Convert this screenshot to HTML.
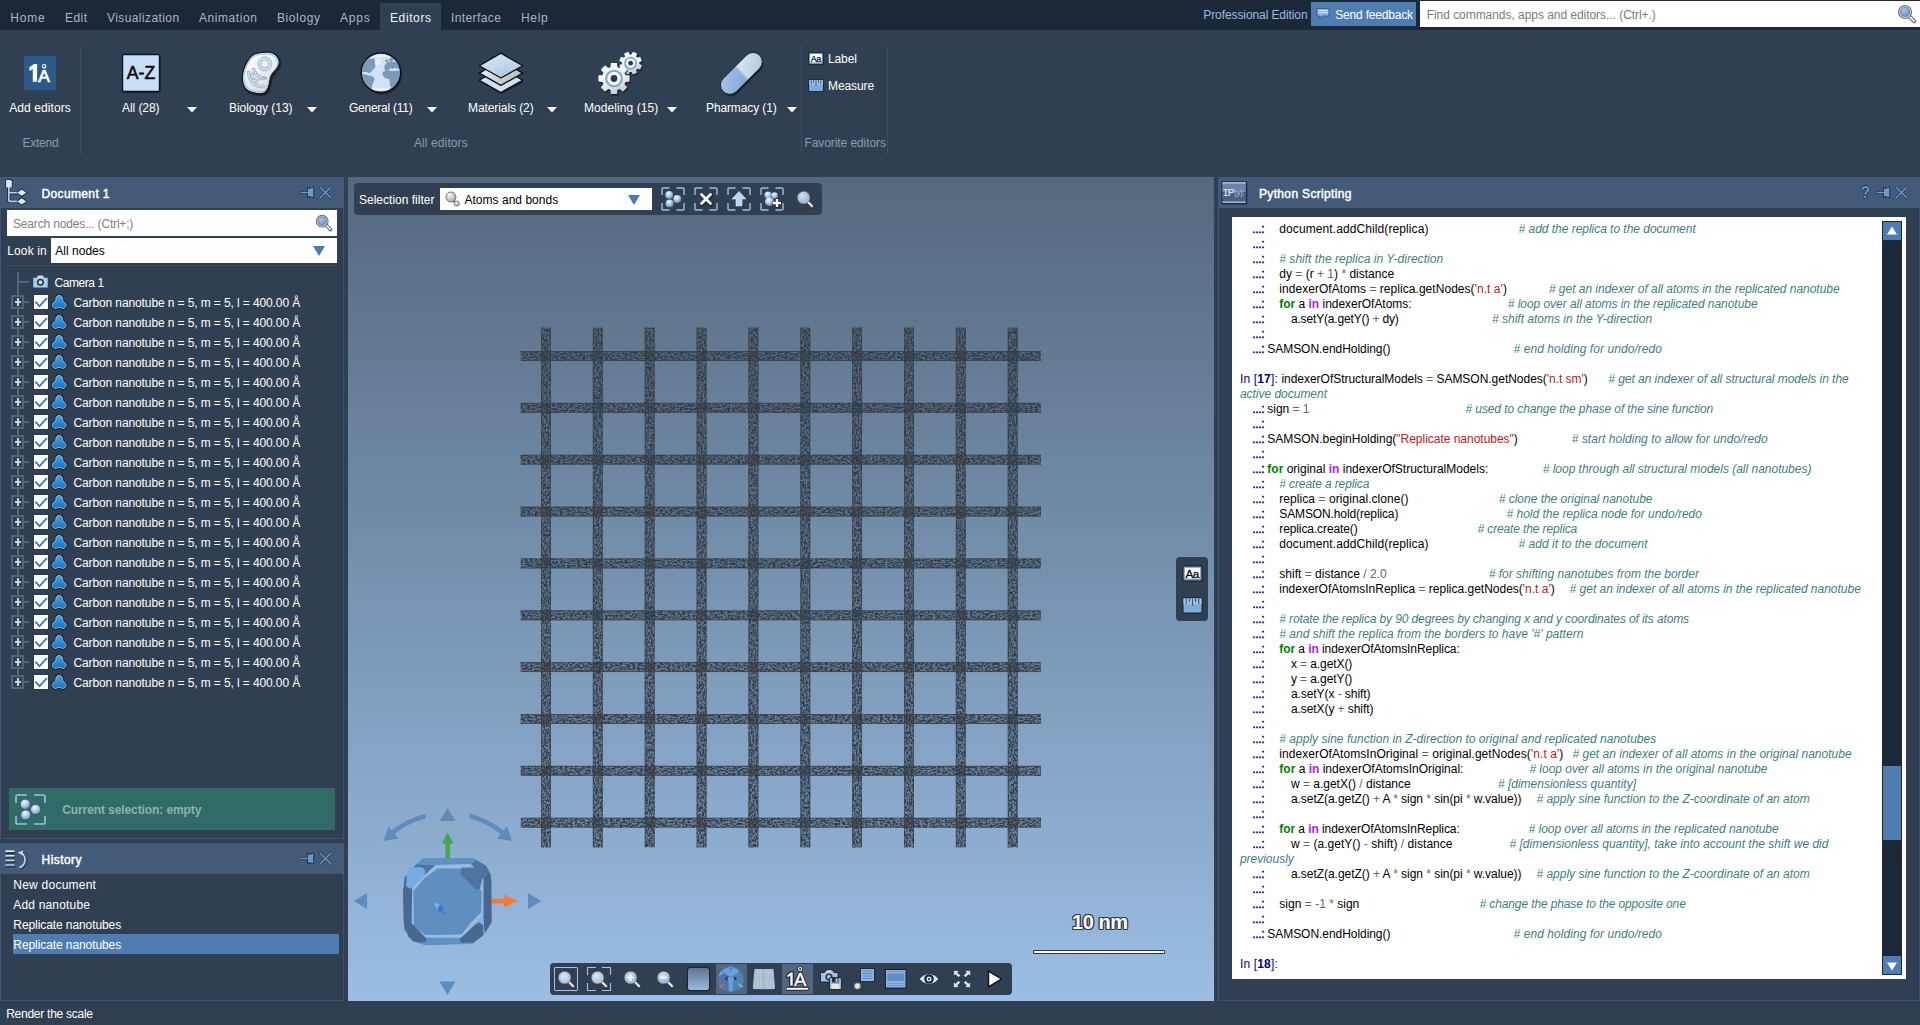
<!DOCTYPE html>
<html><head><meta charset="utf-8"><title>SAMSON</title><style>
html,body{margin:0;padding:0}
body{width:1920px;height:1025px;overflow:hidden;position:relative;background:#313f53;font-family:"Liberation Sans",sans-serif;font-size:12px}
.t{position:absolute;white-space:pre;font-family:"Liberation Sans",sans-serif}
svg{display:block;overflow:visible}
</style></head>
<body>
<div style="position:absolute;left:0px;top:0px;width:1920px;height:30px;background:#1c2737;"></div>
<div style="position:absolute;left:380px;top:3px;width:61px;height:27px;background:#313f53;"></div>
<span class="t" style="left:10.3px;top:12.09px;color:#abb6c6;font-size:12px;line-height:12px;letter-spacing:0.796px;">Home</span>
<span class="t" style="left:65px;top:12.09px;color:#abb6c6;font-size:12px;line-height:12px;letter-spacing:0.453px;">Edit</span>
<span class="t" style="left:107px;top:12.09px;color:#abb6c6;font-size:12px;line-height:12px;letter-spacing:0.411px;">Visualization</span>
<span class="t" style="left:199px;top:12.09px;color:#abb6c6;font-size:12px;line-height:12px;letter-spacing:0.569px;">Animation</span>
<span class="t" style="left:277px;top:12.09px;color:#abb6c6;font-size:12px;line-height:12px;letter-spacing:0.592px;">Biology</span>
<span class="t" style="left:340px;top:12.09px;color:#abb6c6;font-size:12px;line-height:12px;letter-spacing:0.785px;">Apps</span>
<span class="t" style="left:390px;top:12.09px;color:#f2f5f9;font-size:12px;line-height:12px;letter-spacing:0.606px;">Editors</span>
<span class="t" style="left:451px;top:12.09px;color:#abb6c6;font-size:12px;line-height:12px;letter-spacing:0.400px;">Interface</span>
<span class="t" style="left:521px;top:12.09px;color:#abb6c6;font-size:12px;line-height:12px;letter-spacing:0.653px;">Help</span>
<span class="t" style="left:1203.3px;top:9.09px;color:#9dbbe0;font-size:12px;line-height:12px;letter-spacing:-0.093px;">Professional Edition</span>
<div style="position:absolute;left:1311px;top:2px;width:105px;height:24px;background:#4f7db2;"></div>
<svg style="position:absolute;left:1316px;top:8px" width="14" height="12" viewBox="0 0 14 12">
<path d="M1 0.5h12v7.5h-7l-2.2 3v-3h-2.8z" fill="#8fb4de" stroke="#3a5f90" stroke-width="1"/>
<path d="M2 2.5h10M2 4.5h10" stroke="#c9def5" stroke-width="1"/></svg>
<span class="t" style="left:1335.3px;top:9.09px;color:#fff;font-size:12px;line-height:12px;letter-spacing:-0.197px;">Send feedback</span>
<div style="position:absolute;left:1420px;top:1px;width:500px;height:26px;background:#fff;"></div>
<span class="t" style="left:1426.7px;top:9.09px;color:#7b7b7b;font-size:12px;line-height:12px;letter-spacing:-0.046px;">Find commands, apps and editors... (Ctrl+.)</span>
<svg style="position:absolute;left:1897px;top:4px" width="20" height="20" viewBox="0 0 20 20">
<defs><radialGradient id="mg1" cx="0.38" cy="0.3" r="0.75"><stop offset="0" stop-color="#a8c8ee"/><stop offset="1" stop-color="#5f90d2"/></radialGradient></defs>
<path d="M12.6 12.6L17 17" stroke="#0b0f16" stroke-width="4.4" stroke-linecap="round" opacity="0.22" transform="translate(0.6,0.8)"/>
<path d="M12.4 12.4L17 17" stroke="#5d6166" stroke-width="3.7" stroke-linecap="round"/>
<path d="M13 13L16.9 16.9" stroke="#fbfbfb" stroke-width="1.9" stroke-linecap="round"/>
<circle cx="8" cy="8" r="6.5" fill="#e3e5e8" stroke="#6f7277" stroke-width="1.2"/><circle cx="8" cy="8" r="4.7" fill="url(#mg1)" stroke="#75787d" stroke-width="0.9"/>
</svg>
<div style="position:absolute;left:0px;top:30px;width:1920px;height:147px;background:#313f53;"></div>
<div style="position:absolute;left:80px;top:45px;width:1px;height:109px;background:#3e4d63;"></div>
<div style="position:absolute;left:801px;top:45px;width:1px;height:109px;background:#3e4d63;"></div>
<div style="position:absolute;left:887px;top:45px;width:1px;height:109px;background:#3e4d63;"></div>
<div style="position:absolute;left:24px;top:56px;width:32px;height:34px;background:#2c5b8b;border-radius:3px"></div>
<svg style="position:absolute;left:24px;top:56px" width="32" height="34" viewBox="0 0 32 34">
<path d="M13.1 7.9V25.8H8.8V13L5.7 15L5.2 11.6L10 7.9Z" fill="#fff"/>
<text x="14.3" y="25.8" font-family="Liberation Sans" font-size="17.4" fill="#fff" stroke="#fff" stroke-width="0.7">A</text>
<circle cx="20.2" cy="10.2" r="1.7" fill="none" stroke="#fff" stroke-width="1.1"/></svg>
<span class="t" style="left:9.2px;top:102.09px;color:#fff;font-size:12px;line-height:12px;letter-spacing:0.082px;">Add editors</span>
<span class="t" style="left:22.5px;top:137.09px;color:#8c9bb0;font-size:12px;line-height:12px;letter-spacing:-0.260px;">Extend</span>
<span class="t" style="left:122px;top:102.09px;color:#fff;font-size:12px;line-height:12px;letter-spacing:-0.064px;">All (28)</span>
<svg style="position:absolute;left:186.5px;top:107px" width="10" height="6" viewBox="0 0 10 6"><path d="M0 0h10l-5 5.6z" fill="#fff"/></svg>
<span class="t" style="left:229px;top:102.09px;color:#fff;font-size:12px;line-height:12px;letter-spacing:-0.044px;">Biology (13)</span>
<svg style="position:absolute;left:306.5px;top:107px" width="10" height="6" viewBox="0 0 10 6"><path d="M0 0h10l-5 5.6z" fill="#fff"/></svg>
<span class="t" style="left:349px;top:102.09px;color:#fff;font-size:12px;line-height:12px;letter-spacing:-0.249px;">General (11)</span>
<svg style="position:absolute;left:426.5px;top:107px" width="10" height="6" viewBox="0 0 10 6"><path d="M0 0h10l-5 5.6z" fill="#fff"/></svg>
<span class="t" style="left:468px;top:102.09px;color:#fff;font-size:12px;line-height:12px;letter-spacing:-0.084px;">Materials (2)</span>
<svg style="position:absolute;left:546.5px;top:107px" width="10" height="6" viewBox="0 0 10 6"><path d="M0 0h10l-5 5.6z" fill="#fff"/></svg>
<span class="t" style="left:584px;top:102.09px;color:#fff;font-size:12px;line-height:12px;letter-spacing:0.071px;">Modeling (15)</span>
<svg style="position:absolute;left:666.5px;top:107px" width="10" height="6" viewBox="0 0 10 6"><path d="M0 0h10l-5 5.6z" fill="#fff"/></svg>
<span class="t" style="left:706px;top:102.09px;color:#fff;font-size:12px;line-height:12px;letter-spacing:-0.119px;">Pharmacy (1)</span>
<svg style="position:absolute;left:786.5px;top:107px" width="10" height="6" viewBox="0 0 10 6"><path d="M0 0h10l-5 5.6z" fill="#fff"/></svg>
<span class="t" style="left:414px;top:137.09px;color:#8c9bb0;font-size:12px;line-height:12px;letter-spacing:0.101px;">All editors</span>
<span class="t" style="left:804.5px;top:137.09px;color:#8c9bb0;font-size:12px;line-height:12px;letter-spacing:-0.088px;">Favorite editors</span>
<span class="t" style="left:828px;top:53.09px;color:#fff;font-size:12px;line-height:12px;letter-spacing:-0.115px;">Label</span>
<span class="t" style="left:828px;top:80.09px;color:#fff;font-size:12px;line-height:12px;letter-spacing:-0.084px;">Measure</span>
<svg style="position:absolute;left:808.2px;top:51.5px" width="16" height="13" viewBox="0 0 16 13">
<rect x="0.4" y="0.4" width="15.2" height="12.2" rx="1.2" fill="#141b27"/>
<rect x="1.1" y="1.1" width="13.8" height="10.8" rx="0.8" fill="#7099c9"/>
<rect x="2.1" y="2.1" width="11.8" height="8.4" fill="#fdfdfd"/>
<text x="2.7" y="9.7" font-family="Liberation Sans" font-size="9" fill="#0a0a0a" stroke="#0a0a0a" stroke-width="0.25" letter-spacing="-0.5">Aa</text></svg>
<svg style="position:absolute;left:808.2px;top:78.6px" width="16" height="13" viewBox="0 0 16 13">
<rect x="0.4" y="0.4" width="15.2" height="12.2" rx="1.2" fill="#141b27"/>
<rect x="1.1" y="1.1" width="13.8" height="10.8" rx="0.6" fill="#80acdd"/>
<rect x="1.1" y="1.1" width="13.8" height="4.4" fill="#a3c6ec"/>
<path d="M3.2 1.1v4.2M5.6 1.1v3M8 1.1v5.6M10.4 1.1v3M12.8 1.1v4.2" stroke="#3b5878" stroke-width="0.9"/></svg>
<svg style="position:absolute;left:120px;top:52px" width="44" height="44" viewBox="0 0 44 44">
<rect x="2.5" y="2.5" width="37" height="37" rx="1.5" fill="#0b0f16" opacity="0.55" transform="translate(1.2,1.6)"/>
<rect x="2.5" y="2.5" width="37" height="37" rx="1" fill="#c9dff7" stroke="#10151d" stroke-width="1.4"/>
<text x="21" y="27.2" text-anchor="middle" font-family="Liberation Sans" font-size="17.6" fill="#0a0a0a" stroke="#0a0a0a" stroke-width="0.55" letter-spacing="0.1">A-Z</text></svg>
<svg style="position:absolute;left:235px;top:46px" width="52" height="52" viewBox="0 0 52 52">
<defs><linearGradient id="bio1" x1="0.2" y1="0" x2="0.7" y2="1"><stop offset="0" stop-color="#ffffff"/><stop offset="1" stop-color="#d9dde1"/></linearGradient></defs>
<g transform="translate(26,27) scale(1.035) translate(-26,-27)"><path d="M19.79 8.63Q21.82 7.61 26.13 7.10Q30.44 6.60 33.99 6.98Q37.54 7.36 39.83 9.26Q42.11 11.16 43.13 13.70Q44.14 16.24 43.38 18.77Q42.62 21.31 40.59 23.59Q38.56 25.88 37.04 27.65Q35.51 29.43 35.01 31.96Q34.50 34.50 33.99 37.54Q33.49 40.59 31.96 43.13Q30.44 45.66 28.41 46.42Q26.38 47.18 23.34 46.93Q20.29 46.68 17.00 45.66Q13.70 44.65 11.67 42.62Q9.64 40.59 8.75 37.54Q7.86 34.50 7.99 30.95Q8.12 27.40 9.13 23.85Q10.15 20.29 12.18 16.74Q14.21 13.19 15.98 11.42Q17.76 9.64 19.79 8.63Z" fill="#0b0f16" stroke="#0b0f16" stroke-width="2" opacity="0.55" transform="translate(1,1.4)"/>
<path d="M19.79 8.63Q21.82 7.61 26.13 7.10Q30.44 6.60 33.99 6.98Q37.54 7.36 39.83 9.26Q42.11 11.16 43.13 13.70Q44.14 16.24 43.38 18.77Q42.62 21.31 40.59 23.59Q38.56 25.88 37.04 27.65Q35.51 29.43 35.01 31.96Q34.50 34.50 33.99 37.54Q33.49 40.59 31.96 43.13Q30.44 45.66 28.41 46.42Q26.38 47.18 23.34 46.93Q20.29 46.68 17.00 45.66Q13.70 44.65 11.67 42.62Q9.64 40.59 8.75 37.54Q7.86 34.50 7.99 30.95Q8.12 27.40 9.13 23.85Q10.15 20.29 12.18 16.74Q14.21 13.19 15.98 11.42Q17.76 9.64 19.79 8.63Z" fill="#c9def4" stroke="#10161f" stroke-width="1.1"/></g>
<path d="M19.79 8.63Q21.82 7.61 26.13 7.10Q30.44 6.60 33.99 6.98Q37.54 7.36 39.83 9.26Q42.11 11.16 43.13 13.70Q44.14 16.24 43.38 18.77Q42.62 21.31 40.59 23.59Q38.56 25.88 37.04 27.65Q35.51 29.43 35.01 31.96Q34.50 34.50 33.99 37.54Q33.49 40.59 31.96 43.13Q30.44 45.66 28.41 46.42Q26.38 47.18 23.34 46.93Q20.29 46.68 17.00 45.66Q13.70 44.65 11.67 42.62Q9.64 40.59 8.75 37.54Q7.86 34.50 7.99 30.95Q8.12 27.40 9.13 23.85Q10.15 20.29 12.18 16.74Q14.21 13.19 15.98 11.42Q17.76 9.64 19.79 8.63Z" fill="url(#bio1)" stroke="#8792a0" stroke-width="0.5" transform="translate(26,27) scale(0.935) translate(-26,-27)"/>
<circle cx="29.83" cy="17.86" r="7.10" fill="#c5dcf3" stroke="#8792a0" stroke-width="0.5"/>
<circle cx="29.83" cy="17.86" r="3.86" fill="#f1f2f3" stroke="#8792a0" stroke-width="0.5"/>
<g fill="none" stroke-linecap="round">
<path d="M13.60 26.38Q14.21 35.51 20.29 38.56T28.16 40.33M18.52 23.34Q20.80 29.93 25.37 31.20T30.34 32.06M17.00 28.41Q17.25 32.47 19.03 32.47" stroke="#8792a0" stroke-width="3.1"/>
<path d="M13.60 26.38Q14.21 35.51 20.29 38.56T28.16 40.33M18.52 23.34Q20.80 29.93 25.37 31.20T30.34 32.06M17.00 28.41Q17.25 32.47 19.03 32.47" stroke="#c5dcf3" stroke-width="2.3"/>
<path d="M30.34 32.06Q22.83 32.47 21.31 35.51" stroke="#8792a0" stroke-width="2"/><path d="M30.34 32.06Q22.83 32.47 21.31 35.51" stroke="#c5dcf3" stroke-width="1.2"/>
</g></svg>
<svg style="position:absolute;left:360px;top:52px" width="44" height="44" viewBox="0 0 44 44">
<defs><clipPath id="gcl"><circle cx="20.9" cy="20.6" r="18.9"/></clipPath></defs>
<circle cx="22" cy="22.4" r="20" fill="#0b0f16" opacity="0.6"/>
<circle cx="20.9" cy="20.6" r="19.6" fill="#cfe3f8" stroke="#0d1219" stroke-width="1.5"/>
<g clip-path="url(#gcl)">
<path d="M2.6 10.7L7.2 7.3L13.8 7.1L14.9 9.2L14.5 15.3L9.7 20.4L5.1 19.1L2.4 19.4L2.0 15.3ZM2.6 22.4L7.7 23.9L12.3 24.9L14.0 27.0L12.3 31.5L10.7 36.1L5.1 32.6L2.6 27.0ZM24.9 14.3L27.5 10.7L31.5 10.2L35.6 10.7L38.6 14.3L39.7 16.9L35.6 15.3L32.5 16.3L30.5 15.3L28.0 17.8L25.4 17.8ZM29.5 8.2L31.5 5.7L33.8 6.7L31.5 8.8ZM25.9 8.2L27.5 8.0L27.5 9.5L26.1 9.5ZM23.2 20.4L26.5 19.1L33.6 19.6L40.3 19.4L40.3 24.4L37.1 32.6L32.5 36.1L30.5 33.6L30.0 27.0L25.4 25.5L23.2 23.4Z" fill="#7b99b9" stroke="#7b99b9" stroke-width="1.2" stroke-linejoin="round"/>
<path d="M15.3 7.3L20.4 7.1L20.4 10.7L17.3 14.0L15.3 11.3Z" fill="#ececec" stroke="#ececec" stroke-width="1" stroke-linejoin="round"/>
<ellipse cx="20.9" cy="4.2" rx="8.4" ry="1.1" fill="#f1efeb"/>
<ellipse cx="20.9" cy="37.2" rx="9.4" ry="1.4" fill="#f1efeb"/>
</g></svg>
<svg style="position:absolute;left:478px;top:52px" width="46" height="44" viewBox="0 0 46 44">
<defs><linearGradient id="ly1" x1="0.2" y1="0" x2="0.7" y2="1"><stop offset="0" stop-color="#d8e8fa"/><stop offset="1" stop-color="#aec6e0"/></linearGradient>
<linearGradient id="ly2" x1="0" y1="0" x2="1" y2="0.6"><stop offset="0" stop-color="#f6f6f6"/><stop offset="1" stop-color="#b9bcc0"/></linearGradient></defs>
<g stroke-linejoin="round">
<path d="M22.9 1.1L44.7 13.8L22.9 26L1.3 13.8Z" fill="#0b0f16" opacity="0.55" transform="translate(0.9,16.2)"/>
<path d="M22.9 1.1L44.7 13.8L22.9 26L1.3 13.8Z" fill="#cde1f6" stroke="#0b0f16" stroke-width="1.3" transform="translate(0,14.46)"/>
<path d="M22.9 1.1L44.7 13.8L22.9 26L1.3 13.8Z" fill="url(#ly2)" stroke="#0b0f16" stroke-width="1.3" transform="translate(0,7.36)"/>
<path d="M22.9 1.1L44.7 13.8L22.9 26L1.3 13.8Z" fill="url(#ly1)" stroke="#0b0f16" stroke-width="1.3"/></g></svg>
<svg style="position:absolute;left:598px;top:51px" width="46" height="46" viewBox="0 0 46 46">
<defs><linearGradient id="gg" x1="0.2" y1="0" x2="0.6" y2="1"><stop offset="0" stop-color="#ffffff"/><stop offset="0.6" stop-color="#eceef0"/><stop offset="1" stop-color="#c6cbd0"/></linearGradient></defs>
<path d="M43.10 14.72 L41.81 17.84 L39.15 16.96 L37.36 18.75 L38.24 21.41 L35.12 22.70 L33.87 20.20 L31.33 20.20 L30.08 22.70 L26.96 21.41 L27.84 18.75 L26.05 16.96 L23.39 17.84 L22.10 14.72 L24.60 13.47 L24.60 10.93 L22.10 9.68 L23.39 6.56 L26.05 7.44 L27.84 5.65 L26.96 2.99 L30.08 1.70 L31.33 4.20 L33.87 4.20 L35.12 1.70 L38.24 2.99 L37.36 5.65 L39.15 7.44 L41.81 6.56 L43.10 9.68 L40.60 10.93 L40.60 13.47Z" fill="#0b0f16" stroke="#0b0f16" stroke-width="2.4" stroke-linejoin="round" opacity="0.55" transform="translate(0.8,1.2)"/>
<path d="M43.10 14.72 L41.81 17.84 L39.15 16.96 L37.36 18.75 L38.24 21.41 L35.12 22.70 L33.87 20.20 L31.33 20.20 L30.08 22.70 L26.96 21.41 L27.84 18.75 L26.05 16.96 L23.39 17.84 L22.10 14.72 L24.60 13.47 L24.60 10.93 L22.10 9.68 L23.39 6.56 L26.05 7.44 L27.84 5.65 L26.96 2.99 L30.08 1.70 L31.33 4.20 L33.87 4.20 L35.12 1.70 L38.24 2.99 L37.36 5.65 L39.15 7.44 L41.81 6.56 L43.10 9.68 L40.60 10.93 L40.60 13.47Z" fill="url(#gg)" stroke="url(#gg)" stroke-width="1.4" stroke-linejoin="round"/>
<circle cx="32.6" cy="12.2" r="5.6" fill="#fbfbfc" stroke="#7ba7d9" stroke-width="1.7"/>
<circle cx="32.6" cy="12.2" r="2.4" fill="#2b394d"/>
<path d="M30.82 25.15 L30.82 29.85 L26.94 30.13 L25.59 33.38 L28.14 36.32 L24.82 39.64 L21.88 37.09 L18.63 38.44 L18.35 42.32 L13.65 42.32 L13.37 38.44 L10.12 37.09 L7.18 39.64 L3.86 36.32 L6.41 33.38 L5.06 30.13 L1.18 29.85 L1.18 25.15 L5.06 24.87 L6.41 21.62 L3.86 18.68 L7.18 15.36 L10.12 17.91 L13.37 16.56 L13.65 12.68 L18.35 12.68 L18.63 16.56 L21.88 17.91 L24.82 15.36 L28.14 18.68 L25.59 21.62 L26.94 24.87Z" fill="#0b0f16" stroke="#0b0f16" stroke-width="2.6" stroke-linejoin="round" opacity="0.55" transform="translate(0.8,1.2)"/>
<path d="M30.82 25.15 L30.82 29.85 L26.94 30.13 L25.59 33.38 L28.14 36.32 L24.82 39.64 L21.88 37.09 L18.63 38.44 L18.35 42.32 L13.65 42.32 L13.37 38.44 L10.12 37.09 L7.18 39.64 L3.86 36.32 L6.41 33.38 L5.06 30.13 L1.18 29.85 L1.18 25.15 L5.06 24.87 L6.41 21.62 L3.86 18.68 L7.18 15.36 L10.12 17.91 L13.37 16.56 L13.65 12.68 L18.35 12.68 L18.63 16.56 L21.88 17.91 L24.82 15.36 L28.14 18.68 L25.59 21.62 L26.94 24.87Z" fill="url(#gg)" stroke="url(#gg)" stroke-width="1.6" stroke-linejoin="round"/>
<circle cx="16" cy="27.5" r="7.8" fill="#fbfbfc" stroke="#7ba7d9" stroke-width="2.1"/>
<circle cx="16" cy="27.5" r="3.4" fill="#2b394d"/></svg>
<svg style="position:absolute;left:718px;top:51px" width="48" height="46" viewBox="0 0 48 46">
<defs><linearGradient id="pl1" x1="0" y1="0" x2="1" y2="1"><stop offset="0" stop-color="#dbe8f6"/><stop offset="1" stop-color="#b3c4d6"/></linearGradient>
<linearGradient id="pl2" x1="0" y1="0" x2="1" y2="1"><stop offset="0" stop-color="#a9c9ec"/><stop offset="1" stop-color="#7ea6d2"/></linearGradient>
<clipPath id="plc"><rect x="-25.75" y="-9.3" width="51.5" height="18.6" rx="9.3"/></clipPath></defs>
<g transform="translate(23.4,22.4) rotate(-45)">
<rect x="-25.75" y="-9.3" width="51.5" height="18.6" rx="9.3" fill="#0b0f16" opacity="0.6" transform="translate(-0.6,2.2)"/>
<g clip-path="url(#plc)"><rect x="-26.75" y="-10.3" width="26.75" height="20.6" fill="url(#pl2)"/><rect x="0" y="-10.3" width="26.75" height="20.6" fill="url(#pl1)"/><rect x="-1.2" y="-10.3" width="2.4" height="20.6" fill="#9dbde0"/></g>
<rect x="-25.75" y="-9.3" width="51.5" height="18.6" rx="9.3" fill="none" stroke="#1a222e" stroke-width="0.9"/>
</g></svg>
<svg width="0" height="0" style="position:absolute"><defs><linearGradient id="molg" x1="0" y1="0" x2="0" y2="1"><stop offset="0" stop-color="#3ea5ee"/><stop offset="1" stop-color="#1a73b9"/></linearGradient></defs></svg>
<div style="position:absolute;left:0px;top:177px;width:344px;height:31px;background:#435b79;"></div>
<div style="position:absolute;left:0px;top:208px;width:344px;height:631px;background:#313f53;box-sizing:border-box;border:1px solid #3d5170;border-top:none;"></div>
<div style="position:absolute;left:0px;top:208px;width:1px;height:631px;background:#3f5676;"></div>
<svg style="position:absolute;left:0px;top:177px" width="32" height="31" viewBox="0 0 32 31">
<g fill="none" stroke="#151e2d" stroke-opacity="0.8" stroke-width="3.4" stroke-linejoin="round"><path d="M8.8 10V22.4Q8.8 24.4 10.8 24.4H17M8.8 15.7H17"/></g>
<rect x="5.3" y="2.3" width="7.2" height="8.8" rx="1" fill="#151e2d" opacity="0.85"/>
<path d="M17 15.7L21.7 12.2L26.6 15.7L21.7 19.2Z M17 24.4L21.7 20.9L26.6 24.4L21.7 27.9Z" fill="#151e2d" stroke="#151e2d" stroke-width="1.4" opacity="0.8"/>
<path d="M8.8 10V22.4Q8.8 24.4 10.8 24.4H17M8.8 15.7H17" fill="none" stroke="#b3d2f3" stroke-width="1.7"/>
<path d="M6.1 3.1H10.3L11.8 4.6V10.4H6.1Z" fill="#d3e5f9"/><path d="M10 3.2V4.9H11.7" fill="none" stroke="#f7fbff" stroke-width="0.8"/>
<path d="M17.2 15.7L21.7 12.6L26.3 15.7L21.7 18.8Z M17.2 24.4L21.7 21.3L26.3 24.4L21.7 27.5Z" fill="#d7e8fa"/></svg>
<span class="t" style="left:41.5px;top:188.09px;color:#fff;font-size:12px;line-height:12px;-webkit-text-stroke:0.45px #fff;letter-spacing:0.360px;">Document 1</span>
<svg style="position:absolute;left:300px;top:187px" width="15" height="11" viewBox="0 0 15 11">
<g stroke="#27354b" stroke-width="2.2" stroke-linejoin="round" stroke-linecap="round" fill="#27354b">
<path d="M1 5.5H8"/><path d="M8 0.9C8.6 2 9.8 2.2 10.4 1.6L13.4 0.8C13 3.5 13 7.5 13.4 10.2L10.4 9.4C9.8 8.8 8.6 9 8 10.1Z"/></g>
<path d="M1 5.5H8" stroke="#6a99cf" stroke-width="1.2" stroke-linecap="round"/>
<path d="M8 0.9C8.6 2 9.8 2.2 10.4 1.6L13.4 0.8C13 3.5 13 7.5 13.4 10.2L10.4 9.4C9.8 8.8 8.6 9 8 10.1Z" fill="#6a99cf"/></svg>
<svg style="position:absolute;left:319px;top:186px" width="13" height="13" viewBox="0 0 13 13">
<path d="M1.2 1.2L11.8 11.8M11.8 1.2L1.2 11.8" stroke="#27354b" stroke-width="2.8" stroke-linecap="round"/>
<path d="M1.2 1.2L11.8 11.8M11.8 1.2L1.2 11.8" stroke="#6a99cf" stroke-width="1.5" stroke-linecap="round"/></svg>
<div style="position:absolute;left:7px;top:210px;width:330px;height:26px;background:#fff;"></div>
<span class="t" style="left:13px;top:218.09px;color:#808080;font-size:12px;line-height:12px;letter-spacing:-0.175px;">Search nodes... (Ctrl+;)</span>
<svg style="position:absolute;left:315px;top:213.5px" width="18" height="18" viewBox="0 0 20 20">
<defs><radialGradient id="mg2" cx="0.38" cy="0.3" r="0.75"><stop offset="0" stop-color="#a8c8ee"/><stop offset="1" stop-color="#5f90d2"/></radialGradient></defs>
<path d="M12.6 12.6L17 17" stroke="#0b0f16" stroke-width="4.4" stroke-linecap="round" opacity="0.22" transform="translate(0.6,0.8)"/>
<path d="M12.4 12.4L17 17" stroke="#5d6166" stroke-width="3.7" stroke-linecap="round"/>
<path d="M13 13L16.9 16.9" stroke="#fbfbfb" stroke-width="1.9" stroke-linecap="round"/>
<circle cx="8" cy="8" r="6.5" fill="#e3e5e8" stroke="#6f7277" stroke-width="1.2"/><circle cx="8" cy="8" r="4.7" fill="url(#mg2)" stroke="#75787d" stroke-width="0.9"/>
</svg>
<span class="t" style="left:7.3px;top:245.09px;color:#fff;font-size:12px;line-height:12px;letter-spacing:0.114px;">Look in</span>
<div style="position:absolute;left:51px;top:238px;width:286px;height:25px;background:#fff;"></div>
<span class="t" style="left:55.3px;top:245.09px;color:#000;font-size:12px;line-height:12px;letter-spacing:0.014px;">All nodes</span>
<svg style="position:absolute;left:313px;top:246px" width="12" height="10" viewBox="0 0 12 10"><path d="M0 0h12l-6 10z" fill="#4a7bb5"/></svg>
<div style="position:absolute;left:7px;top:265px;width:330px;height:1px;background:#3d4c62;"></div>
<div style="position:absolute;left:17px;top:272px;width:2px;height:411px;background:#55647b;"></div>
<div style="position:absolute;left:19px;top:281px;width:10px;height:2px;background:#55647b;"></div>
<svg style="position:absolute;left:33px;top:275px" width="15" height="13" viewBox="0 0 15 13">
<path d="M0.3 2.8h3.4l1-2.3h5.4l1 2.3h3.6v9.6H0.3z" fill="#a7ccf4"/>
<rect x="5.6" y="1.2" width="3.6" height="1.6" fill="#e8e8e8"/>
<circle cx="7.4" cy="7.2" r="3.5" fill="#2a2e36"/><circle cx="7.4" cy="7.2" r="2" fill="#d9d5d2"/></svg>
<span class="t" style="left:54.4px;top:277.09px;color:#fff;font-size:12px;line-height:12px;letter-spacing:-0.411px;">Camera 1</span>
<div style="position:absolute;left:11px;top:295px;width:13px;height:14px;box-sizing:border-box;border:2px solid #55647b;background:#313f53"></div>
<div style="position:absolute;left:14.6px;top:301px;width:6.4px;height:2px;background:#c9d3de;"></div>
<div style="position:absolute;left:16.8px;top:298.2px;width:2px;height:7.6px;background:#c9d3de;"></div>
<div style="position:absolute;left:24px;top:301px;width:5px;height:2px;background:#55647b;"></div>
<div style="position:absolute;left:34px;top:295px;width:14px;height:14px;background:#fff;box-shadow:0 0 0 0.6px #243246;"></div>
<svg style="position:absolute;left:34px;top:295px" width="14" height="14" viewBox="0 0 14 14"><path d="M1.3 6.6L5.5 11.2L12.9 3.2" fill="none" stroke="#4a7ab0" stroke-width="1.9"/></svg>
<svg style="position:absolute;left:51px;top:294px" width="17" height="16" viewBox="0 0 17 16">
<path d="M8.2 1.4C10.4 1.4 11.6 3 11.6 4.8C11.6 6.4 12 7.4 13.4 8.2C15.2 9.2 15.6 11.2 14.8 12.7C13.9 14.4 11.8 14.9 10.2 14C9 13.3 7.4 13.3 6.2 14C4.6 14.9 2.5 14.4 1.6 12.7C0.8 11.2 1.2 9.2 3 8.2C4.4 7.4 4.8 6.4 4.8 4.8C4.8 3 6 1.4 8.2 1.4Z" fill="#0a0f18" stroke="#0a0f18" stroke-width="2.4" stroke-linejoin="round" opacity="0.85"/>
<path d="M8.2 1.4C10.4 1.4 11.6 3 11.6 4.8C11.6 6.4 12 7.4 13.4 8.2C15.2 9.2 15.6 11.2 14.8 12.7C13.9 14.4 11.8 14.9 10.2 14C9 13.3 7.4 13.3 6.2 14C4.6 14.9 2.5 14.4 1.6 12.7C0.8 11.2 1.2 9.2 3 8.2C4.4 7.4 4.8 6.4 4.8 4.8C4.8 3 6 1.4 8.2 1.4Z" fill="url(#molg)" stroke="#bfe0fa" stroke-width="0.7" stroke-linejoin="round"/></svg>
<span class="t" style="left:73.4px;top:297.09px;color:#fff;font-size:12px;line-height:12px;letter-spacing:-0.106px;">Carbon nanotube n = 5, m = 5, l = 400.00 Å</span>
<div style="position:absolute;left:11px;top:315px;width:13px;height:14px;box-sizing:border-box;border:2px solid #55647b;background:#313f53"></div>
<div style="position:absolute;left:14.6px;top:321px;width:6.4px;height:2px;background:#c9d3de;"></div>
<div style="position:absolute;left:16.8px;top:318.2px;width:2px;height:7.6px;background:#c9d3de;"></div>
<div style="position:absolute;left:24px;top:321px;width:5px;height:2px;background:#55647b;"></div>
<div style="position:absolute;left:34px;top:315px;width:14px;height:14px;background:#fff;box-shadow:0 0 0 0.6px #243246;"></div>
<svg style="position:absolute;left:34px;top:315px" width="14" height="14" viewBox="0 0 14 14"><path d="M1.3 6.6L5.5 11.2L12.9 3.2" fill="none" stroke="#4a7ab0" stroke-width="1.9"/></svg>
<svg style="position:absolute;left:51px;top:314px" width="17" height="16" viewBox="0 0 17 16">
<path d="M8.2 1.4C10.4 1.4 11.6 3 11.6 4.8C11.6 6.4 12 7.4 13.4 8.2C15.2 9.2 15.6 11.2 14.8 12.7C13.9 14.4 11.8 14.9 10.2 14C9 13.3 7.4 13.3 6.2 14C4.6 14.9 2.5 14.4 1.6 12.7C0.8 11.2 1.2 9.2 3 8.2C4.4 7.4 4.8 6.4 4.8 4.8C4.8 3 6 1.4 8.2 1.4Z" fill="#0a0f18" stroke="#0a0f18" stroke-width="2.4" stroke-linejoin="round" opacity="0.85"/>
<path d="M8.2 1.4C10.4 1.4 11.6 3 11.6 4.8C11.6 6.4 12 7.4 13.4 8.2C15.2 9.2 15.6 11.2 14.8 12.7C13.9 14.4 11.8 14.9 10.2 14C9 13.3 7.4 13.3 6.2 14C4.6 14.9 2.5 14.4 1.6 12.7C0.8 11.2 1.2 9.2 3 8.2C4.4 7.4 4.8 6.4 4.8 4.8C4.8 3 6 1.4 8.2 1.4Z" fill="url(#molg)" stroke="#bfe0fa" stroke-width="0.7" stroke-linejoin="round"/></svg>
<span class="t" style="left:73.4px;top:317.09px;color:#fff;font-size:12px;line-height:12px;letter-spacing:-0.106px;">Carbon nanotube n = 5, m = 5, l = 400.00 Å</span>
<div style="position:absolute;left:11px;top:335px;width:13px;height:14px;box-sizing:border-box;border:2px solid #55647b;background:#313f53"></div>
<div style="position:absolute;left:14.6px;top:341px;width:6.4px;height:2px;background:#c9d3de;"></div>
<div style="position:absolute;left:16.8px;top:338.2px;width:2px;height:7.6px;background:#c9d3de;"></div>
<div style="position:absolute;left:24px;top:341px;width:5px;height:2px;background:#55647b;"></div>
<div style="position:absolute;left:34px;top:335px;width:14px;height:14px;background:#fff;box-shadow:0 0 0 0.6px #243246;"></div>
<svg style="position:absolute;left:34px;top:335px" width="14" height="14" viewBox="0 0 14 14"><path d="M1.3 6.6L5.5 11.2L12.9 3.2" fill="none" stroke="#4a7ab0" stroke-width="1.9"/></svg>
<svg style="position:absolute;left:51px;top:334px" width="17" height="16" viewBox="0 0 17 16">
<path d="M8.2 1.4C10.4 1.4 11.6 3 11.6 4.8C11.6 6.4 12 7.4 13.4 8.2C15.2 9.2 15.6 11.2 14.8 12.7C13.9 14.4 11.8 14.9 10.2 14C9 13.3 7.4 13.3 6.2 14C4.6 14.9 2.5 14.4 1.6 12.7C0.8 11.2 1.2 9.2 3 8.2C4.4 7.4 4.8 6.4 4.8 4.8C4.8 3 6 1.4 8.2 1.4Z" fill="#0a0f18" stroke="#0a0f18" stroke-width="2.4" stroke-linejoin="round" opacity="0.85"/>
<path d="M8.2 1.4C10.4 1.4 11.6 3 11.6 4.8C11.6 6.4 12 7.4 13.4 8.2C15.2 9.2 15.6 11.2 14.8 12.7C13.9 14.4 11.8 14.9 10.2 14C9 13.3 7.4 13.3 6.2 14C4.6 14.9 2.5 14.4 1.6 12.7C0.8 11.2 1.2 9.2 3 8.2C4.4 7.4 4.8 6.4 4.8 4.8C4.8 3 6 1.4 8.2 1.4Z" fill="url(#molg)" stroke="#bfe0fa" stroke-width="0.7" stroke-linejoin="round"/></svg>
<span class="t" style="left:73.4px;top:337.09px;color:#fff;font-size:12px;line-height:12px;letter-spacing:-0.106px;">Carbon nanotube n = 5, m = 5, l = 400.00 Å</span>
<div style="position:absolute;left:11px;top:355px;width:13px;height:14px;box-sizing:border-box;border:2px solid #55647b;background:#313f53"></div>
<div style="position:absolute;left:14.6px;top:361px;width:6.4px;height:2px;background:#c9d3de;"></div>
<div style="position:absolute;left:16.8px;top:358.2px;width:2px;height:7.6px;background:#c9d3de;"></div>
<div style="position:absolute;left:24px;top:361px;width:5px;height:2px;background:#55647b;"></div>
<div style="position:absolute;left:34px;top:355px;width:14px;height:14px;background:#fff;box-shadow:0 0 0 0.6px #243246;"></div>
<svg style="position:absolute;left:34px;top:355px" width="14" height="14" viewBox="0 0 14 14"><path d="M1.3 6.6L5.5 11.2L12.9 3.2" fill="none" stroke="#4a7ab0" stroke-width="1.9"/></svg>
<svg style="position:absolute;left:51px;top:354px" width="17" height="16" viewBox="0 0 17 16">
<path d="M8.2 1.4C10.4 1.4 11.6 3 11.6 4.8C11.6 6.4 12 7.4 13.4 8.2C15.2 9.2 15.6 11.2 14.8 12.7C13.9 14.4 11.8 14.9 10.2 14C9 13.3 7.4 13.3 6.2 14C4.6 14.9 2.5 14.4 1.6 12.7C0.8 11.2 1.2 9.2 3 8.2C4.4 7.4 4.8 6.4 4.8 4.8C4.8 3 6 1.4 8.2 1.4Z" fill="#0a0f18" stroke="#0a0f18" stroke-width="2.4" stroke-linejoin="round" opacity="0.85"/>
<path d="M8.2 1.4C10.4 1.4 11.6 3 11.6 4.8C11.6 6.4 12 7.4 13.4 8.2C15.2 9.2 15.6 11.2 14.8 12.7C13.9 14.4 11.8 14.9 10.2 14C9 13.3 7.4 13.3 6.2 14C4.6 14.9 2.5 14.4 1.6 12.7C0.8 11.2 1.2 9.2 3 8.2C4.4 7.4 4.8 6.4 4.8 4.8C4.8 3 6 1.4 8.2 1.4Z" fill="url(#molg)" stroke="#bfe0fa" stroke-width="0.7" stroke-linejoin="round"/></svg>
<span class="t" style="left:73.4px;top:357.09px;color:#fff;font-size:12px;line-height:12px;letter-spacing:-0.106px;">Carbon nanotube n = 5, m = 5, l = 400.00 Å</span>
<div style="position:absolute;left:11px;top:375px;width:13px;height:14px;box-sizing:border-box;border:2px solid #55647b;background:#313f53"></div>
<div style="position:absolute;left:14.6px;top:381px;width:6.4px;height:2px;background:#c9d3de;"></div>
<div style="position:absolute;left:16.8px;top:378.2px;width:2px;height:7.6px;background:#c9d3de;"></div>
<div style="position:absolute;left:24px;top:381px;width:5px;height:2px;background:#55647b;"></div>
<div style="position:absolute;left:34px;top:375px;width:14px;height:14px;background:#fff;box-shadow:0 0 0 0.6px #243246;"></div>
<svg style="position:absolute;left:34px;top:375px" width="14" height="14" viewBox="0 0 14 14"><path d="M1.3 6.6L5.5 11.2L12.9 3.2" fill="none" stroke="#4a7ab0" stroke-width="1.9"/></svg>
<svg style="position:absolute;left:51px;top:374px" width="17" height="16" viewBox="0 0 17 16">
<path d="M8.2 1.4C10.4 1.4 11.6 3 11.6 4.8C11.6 6.4 12 7.4 13.4 8.2C15.2 9.2 15.6 11.2 14.8 12.7C13.9 14.4 11.8 14.9 10.2 14C9 13.3 7.4 13.3 6.2 14C4.6 14.9 2.5 14.4 1.6 12.7C0.8 11.2 1.2 9.2 3 8.2C4.4 7.4 4.8 6.4 4.8 4.8C4.8 3 6 1.4 8.2 1.4Z" fill="#0a0f18" stroke="#0a0f18" stroke-width="2.4" stroke-linejoin="round" opacity="0.85"/>
<path d="M8.2 1.4C10.4 1.4 11.6 3 11.6 4.8C11.6 6.4 12 7.4 13.4 8.2C15.2 9.2 15.6 11.2 14.8 12.7C13.9 14.4 11.8 14.9 10.2 14C9 13.3 7.4 13.3 6.2 14C4.6 14.9 2.5 14.4 1.6 12.7C0.8 11.2 1.2 9.2 3 8.2C4.4 7.4 4.8 6.4 4.8 4.8C4.8 3 6 1.4 8.2 1.4Z" fill="url(#molg)" stroke="#bfe0fa" stroke-width="0.7" stroke-linejoin="round"/></svg>
<span class="t" style="left:73.4px;top:377.09px;color:#fff;font-size:12px;line-height:12px;letter-spacing:-0.106px;">Carbon nanotube n = 5, m = 5, l = 400.00 Å</span>
<div style="position:absolute;left:11px;top:395px;width:13px;height:14px;box-sizing:border-box;border:2px solid #55647b;background:#313f53"></div>
<div style="position:absolute;left:14.6px;top:401px;width:6.4px;height:2px;background:#c9d3de;"></div>
<div style="position:absolute;left:16.8px;top:398.2px;width:2px;height:7.6px;background:#c9d3de;"></div>
<div style="position:absolute;left:24px;top:401px;width:5px;height:2px;background:#55647b;"></div>
<div style="position:absolute;left:34px;top:395px;width:14px;height:14px;background:#fff;box-shadow:0 0 0 0.6px #243246;"></div>
<svg style="position:absolute;left:34px;top:395px" width="14" height="14" viewBox="0 0 14 14"><path d="M1.3 6.6L5.5 11.2L12.9 3.2" fill="none" stroke="#4a7ab0" stroke-width="1.9"/></svg>
<svg style="position:absolute;left:51px;top:394px" width="17" height="16" viewBox="0 0 17 16">
<path d="M8.2 1.4C10.4 1.4 11.6 3 11.6 4.8C11.6 6.4 12 7.4 13.4 8.2C15.2 9.2 15.6 11.2 14.8 12.7C13.9 14.4 11.8 14.9 10.2 14C9 13.3 7.4 13.3 6.2 14C4.6 14.9 2.5 14.4 1.6 12.7C0.8 11.2 1.2 9.2 3 8.2C4.4 7.4 4.8 6.4 4.8 4.8C4.8 3 6 1.4 8.2 1.4Z" fill="#0a0f18" stroke="#0a0f18" stroke-width="2.4" stroke-linejoin="round" opacity="0.85"/>
<path d="M8.2 1.4C10.4 1.4 11.6 3 11.6 4.8C11.6 6.4 12 7.4 13.4 8.2C15.2 9.2 15.6 11.2 14.8 12.7C13.9 14.4 11.8 14.9 10.2 14C9 13.3 7.4 13.3 6.2 14C4.6 14.9 2.5 14.4 1.6 12.7C0.8 11.2 1.2 9.2 3 8.2C4.4 7.4 4.8 6.4 4.8 4.8C4.8 3 6 1.4 8.2 1.4Z" fill="url(#molg)" stroke="#bfe0fa" stroke-width="0.7" stroke-linejoin="round"/></svg>
<span class="t" style="left:73.4px;top:397.09px;color:#fff;font-size:12px;line-height:12px;letter-spacing:-0.106px;">Carbon nanotube n = 5, m = 5, l = 400.00 Å</span>
<div style="position:absolute;left:11px;top:415px;width:13px;height:14px;box-sizing:border-box;border:2px solid #55647b;background:#313f53"></div>
<div style="position:absolute;left:14.6px;top:421px;width:6.4px;height:2px;background:#c9d3de;"></div>
<div style="position:absolute;left:16.8px;top:418.2px;width:2px;height:7.6px;background:#c9d3de;"></div>
<div style="position:absolute;left:24px;top:421px;width:5px;height:2px;background:#55647b;"></div>
<div style="position:absolute;left:34px;top:415px;width:14px;height:14px;background:#fff;box-shadow:0 0 0 0.6px #243246;"></div>
<svg style="position:absolute;left:34px;top:415px" width="14" height="14" viewBox="0 0 14 14"><path d="M1.3 6.6L5.5 11.2L12.9 3.2" fill="none" stroke="#4a7ab0" stroke-width="1.9"/></svg>
<svg style="position:absolute;left:51px;top:414px" width="17" height="16" viewBox="0 0 17 16">
<path d="M8.2 1.4C10.4 1.4 11.6 3 11.6 4.8C11.6 6.4 12 7.4 13.4 8.2C15.2 9.2 15.6 11.2 14.8 12.7C13.9 14.4 11.8 14.9 10.2 14C9 13.3 7.4 13.3 6.2 14C4.6 14.9 2.5 14.4 1.6 12.7C0.8 11.2 1.2 9.2 3 8.2C4.4 7.4 4.8 6.4 4.8 4.8C4.8 3 6 1.4 8.2 1.4Z" fill="#0a0f18" stroke="#0a0f18" stroke-width="2.4" stroke-linejoin="round" opacity="0.85"/>
<path d="M8.2 1.4C10.4 1.4 11.6 3 11.6 4.8C11.6 6.4 12 7.4 13.4 8.2C15.2 9.2 15.6 11.2 14.8 12.7C13.9 14.4 11.8 14.9 10.2 14C9 13.3 7.4 13.3 6.2 14C4.6 14.9 2.5 14.4 1.6 12.7C0.8 11.2 1.2 9.2 3 8.2C4.4 7.4 4.8 6.4 4.8 4.8C4.8 3 6 1.4 8.2 1.4Z" fill="url(#molg)" stroke="#bfe0fa" stroke-width="0.7" stroke-linejoin="round"/></svg>
<span class="t" style="left:73.4px;top:417.09px;color:#fff;font-size:12px;line-height:12px;letter-spacing:-0.106px;">Carbon nanotube n = 5, m = 5, l = 400.00 Å</span>
<div style="position:absolute;left:11px;top:435px;width:13px;height:14px;box-sizing:border-box;border:2px solid #55647b;background:#313f53"></div>
<div style="position:absolute;left:14.6px;top:441px;width:6.4px;height:2px;background:#c9d3de;"></div>
<div style="position:absolute;left:16.8px;top:438.2px;width:2px;height:7.6px;background:#c9d3de;"></div>
<div style="position:absolute;left:24px;top:441px;width:5px;height:2px;background:#55647b;"></div>
<div style="position:absolute;left:34px;top:435px;width:14px;height:14px;background:#fff;box-shadow:0 0 0 0.6px #243246;"></div>
<svg style="position:absolute;left:34px;top:435px" width="14" height="14" viewBox="0 0 14 14"><path d="M1.3 6.6L5.5 11.2L12.9 3.2" fill="none" stroke="#4a7ab0" stroke-width="1.9"/></svg>
<svg style="position:absolute;left:51px;top:434px" width="17" height="16" viewBox="0 0 17 16">
<path d="M8.2 1.4C10.4 1.4 11.6 3 11.6 4.8C11.6 6.4 12 7.4 13.4 8.2C15.2 9.2 15.6 11.2 14.8 12.7C13.9 14.4 11.8 14.9 10.2 14C9 13.3 7.4 13.3 6.2 14C4.6 14.9 2.5 14.4 1.6 12.7C0.8 11.2 1.2 9.2 3 8.2C4.4 7.4 4.8 6.4 4.8 4.8C4.8 3 6 1.4 8.2 1.4Z" fill="#0a0f18" stroke="#0a0f18" stroke-width="2.4" stroke-linejoin="round" opacity="0.85"/>
<path d="M8.2 1.4C10.4 1.4 11.6 3 11.6 4.8C11.6 6.4 12 7.4 13.4 8.2C15.2 9.2 15.6 11.2 14.8 12.7C13.9 14.4 11.8 14.9 10.2 14C9 13.3 7.4 13.3 6.2 14C4.6 14.9 2.5 14.4 1.6 12.7C0.8 11.2 1.2 9.2 3 8.2C4.4 7.4 4.8 6.4 4.8 4.8C4.8 3 6 1.4 8.2 1.4Z" fill="url(#molg)" stroke="#bfe0fa" stroke-width="0.7" stroke-linejoin="round"/></svg>
<span class="t" style="left:73.4px;top:437.09px;color:#fff;font-size:12px;line-height:12px;letter-spacing:-0.106px;">Carbon nanotube n = 5, m = 5, l = 400.00 Å</span>
<div style="position:absolute;left:11px;top:455px;width:13px;height:14px;box-sizing:border-box;border:2px solid #55647b;background:#313f53"></div>
<div style="position:absolute;left:14.6px;top:461px;width:6.4px;height:2px;background:#c9d3de;"></div>
<div style="position:absolute;left:16.8px;top:458.2px;width:2px;height:7.6px;background:#c9d3de;"></div>
<div style="position:absolute;left:24px;top:461px;width:5px;height:2px;background:#55647b;"></div>
<div style="position:absolute;left:34px;top:455px;width:14px;height:14px;background:#fff;box-shadow:0 0 0 0.6px #243246;"></div>
<svg style="position:absolute;left:34px;top:455px" width="14" height="14" viewBox="0 0 14 14"><path d="M1.3 6.6L5.5 11.2L12.9 3.2" fill="none" stroke="#4a7ab0" stroke-width="1.9"/></svg>
<svg style="position:absolute;left:51px;top:454px" width="17" height="16" viewBox="0 0 17 16">
<path d="M8.2 1.4C10.4 1.4 11.6 3 11.6 4.8C11.6 6.4 12 7.4 13.4 8.2C15.2 9.2 15.6 11.2 14.8 12.7C13.9 14.4 11.8 14.9 10.2 14C9 13.3 7.4 13.3 6.2 14C4.6 14.9 2.5 14.4 1.6 12.7C0.8 11.2 1.2 9.2 3 8.2C4.4 7.4 4.8 6.4 4.8 4.8C4.8 3 6 1.4 8.2 1.4Z" fill="#0a0f18" stroke="#0a0f18" stroke-width="2.4" stroke-linejoin="round" opacity="0.85"/>
<path d="M8.2 1.4C10.4 1.4 11.6 3 11.6 4.8C11.6 6.4 12 7.4 13.4 8.2C15.2 9.2 15.6 11.2 14.8 12.7C13.9 14.4 11.8 14.9 10.2 14C9 13.3 7.4 13.3 6.2 14C4.6 14.9 2.5 14.4 1.6 12.7C0.8 11.2 1.2 9.2 3 8.2C4.4 7.4 4.8 6.4 4.8 4.8C4.8 3 6 1.4 8.2 1.4Z" fill="url(#molg)" stroke="#bfe0fa" stroke-width="0.7" stroke-linejoin="round"/></svg>
<span class="t" style="left:73.4px;top:457.09px;color:#fff;font-size:12px;line-height:12px;letter-spacing:-0.106px;">Carbon nanotube n = 5, m = 5, l = 400.00 Å</span>
<div style="position:absolute;left:11px;top:475px;width:13px;height:14px;box-sizing:border-box;border:2px solid #55647b;background:#313f53"></div>
<div style="position:absolute;left:14.6px;top:481px;width:6.4px;height:2px;background:#c9d3de;"></div>
<div style="position:absolute;left:16.8px;top:478.2px;width:2px;height:7.6px;background:#c9d3de;"></div>
<div style="position:absolute;left:24px;top:481px;width:5px;height:2px;background:#55647b;"></div>
<div style="position:absolute;left:34px;top:475px;width:14px;height:14px;background:#fff;box-shadow:0 0 0 0.6px #243246;"></div>
<svg style="position:absolute;left:34px;top:475px" width="14" height="14" viewBox="0 0 14 14"><path d="M1.3 6.6L5.5 11.2L12.9 3.2" fill="none" stroke="#4a7ab0" stroke-width="1.9"/></svg>
<svg style="position:absolute;left:51px;top:474px" width="17" height="16" viewBox="0 0 17 16">
<path d="M8.2 1.4C10.4 1.4 11.6 3 11.6 4.8C11.6 6.4 12 7.4 13.4 8.2C15.2 9.2 15.6 11.2 14.8 12.7C13.9 14.4 11.8 14.9 10.2 14C9 13.3 7.4 13.3 6.2 14C4.6 14.9 2.5 14.4 1.6 12.7C0.8 11.2 1.2 9.2 3 8.2C4.4 7.4 4.8 6.4 4.8 4.8C4.8 3 6 1.4 8.2 1.4Z" fill="#0a0f18" stroke="#0a0f18" stroke-width="2.4" stroke-linejoin="round" opacity="0.85"/>
<path d="M8.2 1.4C10.4 1.4 11.6 3 11.6 4.8C11.6 6.4 12 7.4 13.4 8.2C15.2 9.2 15.6 11.2 14.8 12.7C13.9 14.4 11.8 14.9 10.2 14C9 13.3 7.4 13.3 6.2 14C4.6 14.9 2.5 14.4 1.6 12.7C0.8 11.2 1.2 9.2 3 8.2C4.4 7.4 4.8 6.4 4.8 4.8C4.8 3 6 1.4 8.2 1.4Z" fill="url(#molg)" stroke="#bfe0fa" stroke-width="0.7" stroke-linejoin="round"/></svg>
<span class="t" style="left:73.4px;top:477.09px;color:#fff;font-size:12px;line-height:12px;letter-spacing:-0.106px;">Carbon nanotube n = 5, m = 5, l = 400.00 Å</span>
<div style="position:absolute;left:11px;top:495px;width:13px;height:14px;box-sizing:border-box;border:2px solid #55647b;background:#313f53"></div>
<div style="position:absolute;left:14.6px;top:501px;width:6.4px;height:2px;background:#c9d3de;"></div>
<div style="position:absolute;left:16.8px;top:498.2px;width:2px;height:7.6px;background:#c9d3de;"></div>
<div style="position:absolute;left:24px;top:501px;width:5px;height:2px;background:#55647b;"></div>
<div style="position:absolute;left:34px;top:495px;width:14px;height:14px;background:#fff;box-shadow:0 0 0 0.6px #243246;"></div>
<svg style="position:absolute;left:34px;top:495px" width="14" height="14" viewBox="0 0 14 14"><path d="M1.3 6.6L5.5 11.2L12.9 3.2" fill="none" stroke="#4a7ab0" stroke-width="1.9"/></svg>
<svg style="position:absolute;left:51px;top:494px" width="17" height="16" viewBox="0 0 17 16">
<path d="M8.2 1.4C10.4 1.4 11.6 3 11.6 4.8C11.6 6.4 12 7.4 13.4 8.2C15.2 9.2 15.6 11.2 14.8 12.7C13.9 14.4 11.8 14.9 10.2 14C9 13.3 7.4 13.3 6.2 14C4.6 14.9 2.5 14.4 1.6 12.7C0.8 11.2 1.2 9.2 3 8.2C4.4 7.4 4.8 6.4 4.8 4.8C4.8 3 6 1.4 8.2 1.4Z" fill="#0a0f18" stroke="#0a0f18" stroke-width="2.4" stroke-linejoin="round" opacity="0.85"/>
<path d="M8.2 1.4C10.4 1.4 11.6 3 11.6 4.8C11.6 6.4 12 7.4 13.4 8.2C15.2 9.2 15.6 11.2 14.8 12.7C13.9 14.4 11.8 14.9 10.2 14C9 13.3 7.4 13.3 6.2 14C4.6 14.9 2.5 14.4 1.6 12.7C0.8 11.2 1.2 9.2 3 8.2C4.4 7.4 4.8 6.4 4.8 4.8C4.8 3 6 1.4 8.2 1.4Z" fill="url(#molg)" stroke="#bfe0fa" stroke-width="0.7" stroke-linejoin="round"/></svg>
<span class="t" style="left:73.4px;top:497.09px;color:#fff;font-size:12px;line-height:12px;letter-spacing:-0.106px;">Carbon nanotube n = 5, m = 5, l = 400.00 Å</span>
<div style="position:absolute;left:11px;top:515px;width:13px;height:14px;box-sizing:border-box;border:2px solid #55647b;background:#313f53"></div>
<div style="position:absolute;left:14.6px;top:521px;width:6.4px;height:2px;background:#c9d3de;"></div>
<div style="position:absolute;left:16.8px;top:518.2px;width:2px;height:7.6px;background:#c9d3de;"></div>
<div style="position:absolute;left:24px;top:521px;width:5px;height:2px;background:#55647b;"></div>
<div style="position:absolute;left:34px;top:515px;width:14px;height:14px;background:#fff;box-shadow:0 0 0 0.6px #243246;"></div>
<svg style="position:absolute;left:34px;top:515px" width="14" height="14" viewBox="0 0 14 14"><path d="M1.3 6.6L5.5 11.2L12.9 3.2" fill="none" stroke="#4a7ab0" stroke-width="1.9"/></svg>
<svg style="position:absolute;left:51px;top:514px" width="17" height="16" viewBox="0 0 17 16">
<path d="M8.2 1.4C10.4 1.4 11.6 3 11.6 4.8C11.6 6.4 12 7.4 13.4 8.2C15.2 9.2 15.6 11.2 14.8 12.7C13.9 14.4 11.8 14.9 10.2 14C9 13.3 7.4 13.3 6.2 14C4.6 14.9 2.5 14.4 1.6 12.7C0.8 11.2 1.2 9.2 3 8.2C4.4 7.4 4.8 6.4 4.8 4.8C4.8 3 6 1.4 8.2 1.4Z" fill="#0a0f18" stroke="#0a0f18" stroke-width="2.4" stroke-linejoin="round" opacity="0.85"/>
<path d="M8.2 1.4C10.4 1.4 11.6 3 11.6 4.8C11.6 6.4 12 7.4 13.4 8.2C15.2 9.2 15.6 11.2 14.8 12.7C13.9 14.4 11.8 14.9 10.2 14C9 13.3 7.4 13.3 6.2 14C4.6 14.9 2.5 14.4 1.6 12.7C0.8 11.2 1.2 9.2 3 8.2C4.4 7.4 4.8 6.4 4.8 4.8C4.8 3 6 1.4 8.2 1.4Z" fill="url(#molg)" stroke="#bfe0fa" stroke-width="0.7" stroke-linejoin="round"/></svg>
<span class="t" style="left:73.4px;top:517.09px;color:#fff;font-size:12px;line-height:12px;letter-spacing:-0.106px;">Carbon nanotube n = 5, m = 5, l = 400.00 Å</span>
<div style="position:absolute;left:11px;top:535px;width:13px;height:14px;box-sizing:border-box;border:2px solid #55647b;background:#313f53"></div>
<div style="position:absolute;left:14.6px;top:541px;width:6.4px;height:2px;background:#c9d3de;"></div>
<div style="position:absolute;left:16.8px;top:538.2px;width:2px;height:7.6px;background:#c9d3de;"></div>
<div style="position:absolute;left:24px;top:541px;width:5px;height:2px;background:#55647b;"></div>
<div style="position:absolute;left:34px;top:535px;width:14px;height:14px;background:#fff;box-shadow:0 0 0 0.6px #243246;"></div>
<svg style="position:absolute;left:34px;top:535px" width="14" height="14" viewBox="0 0 14 14"><path d="M1.3 6.6L5.5 11.2L12.9 3.2" fill="none" stroke="#4a7ab0" stroke-width="1.9"/></svg>
<svg style="position:absolute;left:51px;top:534px" width="17" height="16" viewBox="0 0 17 16">
<path d="M8.2 1.4C10.4 1.4 11.6 3 11.6 4.8C11.6 6.4 12 7.4 13.4 8.2C15.2 9.2 15.6 11.2 14.8 12.7C13.9 14.4 11.8 14.9 10.2 14C9 13.3 7.4 13.3 6.2 14C4.6 14.9 2.5 14.4 1.6 12.7C0.8 11.2 1.2 9.2 3 8.2C4.4 7.4 4.8 6.4 4.8 4.8C4.8 3 6 1.4 8.2 1.4Z" fill="#0a0f18" stroke="#0a0f18" stroke-width="2.4" stroke-linejoin="round" opacity="0.85"/>
<path d="M8.2 1.4C10.4 1.4 11.6 3 11.6 4.8C11.6 6.4 12 7.4 13.4 8.2C15.2 9.2 15.6 11.2 14.8 12.7C13.9 14.4 11.8 14.9 10.2 14C9 13.3 7.4 13.3 6.2 14C4.6 14.9 2.5 14.4 1.6 12.7C0.8 11.2 1.2 9.2 3 8.2C4.4 7.4 4.8 6.4 4.8 4.8C4.8 3 6 1.4 8.2 1.4Z" fill="url(#molg)" stroke="#bfe0fa" stroke-width="0.7" stroke-linejoin="round"/></svg>
<span class="t" style="left:73.4px;top:537.09px;color:#fff;font-size:12px;line-height:12px;letter-spacing:-0.106px;">Carbon nanotube n = 5, m = 5, l = 400.00 Å</span>
<div style="position:absolute;left:11px;top:555px;width:13px;height:14px;box-sizing:border-box;border:2px solid #55647b;background:#313f53"></div>
<div style="position:absolute;left:14.6px;top:561px;width:6.4px;height:2px;background:#c9d3de;"></div>
<div style="position:absolute;left:16.8px;top:558.2px;width:2px;height:7.6px;background:#c9d3de;"></div>
<div style="position:absolute;left:24px;top:561px;width:5px;height:2px;background:#55647b;"></div>
<div style="position:absolute;left:34px;top:555px;width:14px;height:14px;background:#fff;box-shadow:0 0 0 0.6px #243246;"></div>
<svg style="position:absolute;left:34px;top:555px" width="14" height="14" viewBox="0 0 14 14"><path d="M1.3 6.6L5.5 11.2L12.9 3.2" fill="none" stroke="#4a7ab0" stroke-width="1.9"/></svg>
<svg style="position:absolute;left:51px;top:554px" width="17" height="16" viewBox="0 0 17 16">
<path d="M8.2 1.4C10.4 1.4 11.6 3 11.6 4.8C11.6 6.4 12 7.4 13.4 8.2C15.2 9.2 15.6 11.2 14.8 12.7C13.9 14.4 11.8 14.9 10.2 14C9 13.3 7.4 13.3 6.2 14C4.6 14.9 2.5 14.4 1.6 12.7C0.8 11.2 1.2 9.2 3 8.2C4.4 7.4 4.8 6.4 4.8 4.8C4.8 3 6 1.4 8.2 1.4Z" fill="#0a0f18" stroke="#0a0f18" stroke-width="2.4" stroke-linejoin="round" opacity="0.85"/>
<path d="M8.2 1.4C10.4 1.4 11.6 3 11.6 4.8C11.6 6.4 12 7.4 13.4 8.2C15.2 9.2 15.6 11.2 14.8 12.7C13.9 14.4 11.8 14.9 10.2 14C9 13.3 7.4 13.3 6.2 14C4.6 14.9 2.5 14.4 1.6 12.7C0.8 11.2 1.2 9.2 3 8.2C4.4 7.4 4.8 6.4 4.8 4.8C4.8 3 6 1.4 8.2 1.4Z" fill="url(#molg)" stroke="#bfe0fa" stroke-width="0.7" stroke-linejoin="round"/></svg>
<span class="t" style="left:73.4px;top:557.09px;color:#fff;font-size:12px;line-height:12px;letter-spacing:-0.106px;">Carbon nanotube n = 5, m = 5, l = 400.00 Å</span>
<div style="position:absolute;left:11px;top:575px;width:13px;height:14px;box-sizing:border-box;border:2px solid #55647b;background:#313f53"></div>
<div style="position:absolute;left:14.6px;top:581px;width:6.4px;height:2px;background:#c9d3de;"></div>
<div style="position:absolute;left:16.8px;top:578.2px;width:2px;height:7.6px;background:#c9d3de;"></div>
<div style="position:absolute;left:24px;top:581px;width:5px;height:2px;background:#55647b;"></div>
<div style="position:absolute;left:34px;top:575px;width:14px;height:14px;background:#fff;box-shadow:0 0 0 0.6px #243246;"></div>
<svg style="position:absolute;left:34px;top:575px" width="14" height="14" viewBox="0 0 14 14"><path d="M1.3 6.6L5.5 11.2L12.9 3.2" fill="none" stroke="#4a7ab0" stroke-width="1.9"/></svg>
<svg style="position:absolute;left:51px;top:574px" width="17" height="16" viewBox="0 0 17 16">
<path d="M8.2 1.4C10.4 1.4 11.6 3 11.6 4.8C11.6 6.4 12 7.4 13.4 8.2C15.2 9.2 15.6 11.2 14.8 12.7C13.9 14.4 11.8 14.9 10.2 14C9 13.3 7.4 13.3 6.2 14C4.6 14.9 2.5 14.4 1.6 12.7C0.8 11.2 1.2 9.2 3 8.2C4.4 7.4 4.8 6.4 4.8 4.8C4.8 3 6 1.4 8.2 1.4Z" fill="#0a0f18" stroke="#0a0f18" stroke-width="2.4" stroke-linejoin="round" opacity="0.85"/>
<path d="M8.2 1.4C10.4 1.4 11.6 3 11.6 4.8C11.6 6.4 12 7.4 13.4 8.2C15.2 9.2 15.6 11.2 14.8 12.7C13.9 14.4 11.8 14.9 10.2 14C9 13.3 7.4 13.3 6.2 14C4.6 14.9 2.5 14.4 1.6 12.7C0.8 11.2 1.2 9.2 3 8.2C4.4 7.4 4.8 6.4 4.8 4.8C4.8 3 6 1.4 8.2 1.4Z" fill="url(#molg)" stroke="#bfe0fa" stroke-width="0.7" stroke-linejoin="round"/></svg>
<span class="t" style="left:73.4px;top:577.09px;color:#fff;font-size:12px;line-height:12px;letter-spacing:-0.106px;">Carbon nanotube n = 5, m = 5, l = 400.00 Å</span>
<div style="position:absolute;left:11px;top:595px;width:13px;height:14px;box-sizing:border-box;border:2px solid #55647b;background:#313f53"></div>
<div style="position:absolute;left:14.6px;top:601px;width:6.4px;height:2px;background:#c9d3de;"></div>
<div style="position:absolute;left:16.8px;top:598.2px;width:2px;height:7.6px;background:#c9d3de;"></div>
<div style="position:absolute;left:24px;top:601px;width:5px;height:2px;background:#55647b;"></div>
<div style="position:absolute;left:34px;top:595px;width:14px;height:14px;background:#fff;box-shadow:0 0 0 0.6px #243246;"></div>
<svg style="position:absolute;left:34px;top:595px" width="14" height="14" viewBox="0 0 14 14"><path d="M1.3 6.6L5.5 11.2L12.9 3.2" fill="none" stroke="#4a7ab0" stroke-width="1.9"/></svg>
<svg style="position:absolute;left:51px;top:594px" width="17" height="16" viewBox="0 0 17 16">
<path d="M8.2 1.4C10.4 1.4 11.6 3 11.6 4.8C11.6 6.4 12 7.4 13.4 8.2C15.2 9.2 15.6 11.2 14.8 12.7C13.9 14.4 11.8 14.9 10.2 14C9 13.3 7.4 13.3 6.2 14C4.6 14.9 2.5 14.4 1.6 12.7C0.8 11.2 1.2 9.2 3 8.2C4.4 7.4 4.8 6.4 4.8 4.8C4.8 3 6 1.4 8.2 1.4Z" fill="#0a0f18" stroke="#0a0f18" stroke-width="2.4" stroke-linejoin="round" opacity="0.85"/>
<path d="M8.2 1.4C10.4 1.4 11.6 3 11.6 4.8C11.6 6.4 12 7.4 13.4 8.2C15.2 9.2 15.6 11.2 14.8 12.7C13.9 14.4 11.8 14.9 10.2 14C9 13.3 7.4 13.3 6.2 14C4.6 14.9 2.5 14.4 1.6 12.7C0.8 11.2 1.2 9.2 3 8.2C4.4 7.4 4.8 6.4 4.8 4.8C4.8 3 6 1.4 8.2 1.4Z" fill="url(#molg)" stroke="#bfe0fa" stroke-width="0.7" stroke-linejoin="round"/></svg>
<span class="t" style="left:73.4px;top:597.09px;color:#fff;font-size:12px;line-height:12px;letter-spacing:-0.106px;">Carbon nanotube n = 5, m = 5, l = 400.00 Å</span>
<div style="position:absolute;left:11px;top:615px;width:13px;height:14px;box-sizing:border-box;border:2px solid #55647b;background:#313f53"></div>
<div style="position:absolute;left:14.6px;top:621px;width:6.4px;height:2px;background:#c9d3de;"></div>
<div style="position:absolute;left:16.8px;top:618.2px;width:2px;height:7.6px;background:#c9d3de;"></div>
<div style="position:absolute;left:24px;top:621px;width:5px;height:2px;background:#55647b;"></div>
<div style="position:absolute;left:34px;top:615px;width:14px;height:14px;background:#fff;box-shadow:0 0 0 0.6px #243246;"></div>
<svg style="position:absolute;left:34px;top:615px" width="14" height="14" viewBox="0 0 14 14"><path d="M1.3 6.6L5.5 11.2L12.9 3.2" fill="none" stroke="#4a7ab0" stroke-width="1.9"/></svg>
<svg style="position:absolute;left:51px;top:614px" width="17" height="16" viewBox="0 0 17 16">
<path d="M8.2 1.4C10.4 1.4 11.6 3 11.6 4.8C11.6 6.4 12 7.4 13.4 8.2C15.2 9.2 15.6 11.2 14.8 12.7C13.9 14.4 11.8 14.9 10.2 14C9 13.3 7.4 13.3 6.2 14C4.6 14.9 2.5 14.4 1.6 12.7C0.8 11.2 1.2 9.2 3 8.2C4.4 7.4 4.8 6.4 4.8 4.8C4.8 3 6 1.4 8.2 1.4Z" fill="#0a0f18" stroke="#0a0f18" stroke-width="2.4" stroke-linejoin="round" opacity="0.85"/>
<path d="M8.2 1.4C10.4 1.4 11.6 3 11.6 4.8C11.6 6.4 12 7.4 13.4 8.2C15.2 9.2 15.6 11.2 14.8 12.7C13.9 14.4 11.8 14.9 10.2 14C9 13.3 7.4 13.3 6.2 14C4.6 14.9 2.5 14.4 1.6 12.7C0.8 11.2 1.2 9.2 3 8.2C4.4 7.4 4.8 6.4 4.8 4.8C4.8 3 6 1.4 8.2 1.4Z" fill="url(#molg)" stroke="#bfe0fa" stroke-width="0.7" stroke-linejoin="round"/></svg>
<span class="t" style="left:73.4px;top:617.09px;color:#fff;font-size:12px;line-height:12px;letter-spacing:-0.106px;">Carbon nanotube n = 5, m = 5, l = 400.00 Å</span>
<div style="position:absolute;left:11px;top:635px;width:13px;height:14px;box-sizing:border-box;border:2px solid #55647b;background:#313f53"></div>
<div style="position:absolute;left:14.6px;top:641px;width:6.4px;height:2px;background:#c9d3de;"></div>
<div style="position:absolute;left:16.8px;top:638.2px;width:2px;height:7.6px;background:#c9d3de;"></div>
<div style="position:absolute;left:24px;top:641px;width:5px;height:2px;background:#55647b;"></div>
<div style="position:absolute;left:34px;top:635px;width:14px;height:14px;background:#fff;box-shadow:0 0 0 0.6px #243246;"></div>
<svg style="position:absolute;left:34px;top:635px" width="14" height="14" viewBox="0 0 14 14"><path d="M1.3 6.6L5.5 11.2L12.9 3.2" fill="none" stroke="#4a7ab0" stroke-width="1.9"/></svg>
<svg style="position:absolute;left:51px;top:634px" width="17" height="16" viewBox="0 0 17 16">
<path d="M8.2 1.4C10.4 1.4 11.6 3 11.6 4.8C11.6 6.4 12 7.4 13.4 8.2C15.2 9.2 15.6 11.2 14.8 12.7C13.9 14.4 11.8 14.9 10.2 14C9 13.3 7.4 13.3 6.2 14C4.6 14.9 2.5 14.4 1.6 12.7C0.8 11.2 1.2 9.2 3 8.2C4.4 7.4 4.8 6.4 4.8 4.8C4.8 3 6 1.4 8.2 1.4Z" fill="#0a0f18" stroke="#0a0f18" stroke-width="2.4" stroke-linejoin="round" opacity="0.85"/>
<path d="M8.2 1.4C10.4 1.4 11.6 3 11.6 4.8C11.6 6.4 12 7.4 13.4 8.2C15.2 9.2 15.6 11.2 14.8 12.7C13.9 14.4 11.8 14.9 10.2 14C9 13.3 7.4 13.3 6.2 14C4.6 14.9 2.5 14.4 1.6 12.7C0.8 11.2 1.2 9.2 3 8.2C4.4 7.4 4.8 6.4 4.8 4.8C4.8 3 6 1.4 8.2 1.4Z" fill="url(#molg)" stroke="#bfe0fa" stroke-width="0.7" stroke-linejoin="round"/></svg>
<span class="t" style="left:73.4px;top:637.09px;color:#fff;font-size:12px;line-height:12px;letter-spacing:-0.106px;">Carbon nanotube n = 5, m = 5, l = 400.00 Å</span>
<div style="position:absolute;left:11px;top:655px;width:13px;height:14px;box-sizing:border-box;border:2px solid #55647b;background:#313f53"></div>
<div style="position:absolute;left:14.6px;top:661px;width:6.4px;height:2px;background:#c9d3de;"></div>
<div style="position:absolute;left:16.8px;top:658.2px;width:2px;height:7.6px;background:#c9d3de;"></div>
<div style="position:absolute;left:24px;top:661px;width:5px;height:2px;background:#55647b;"></div>
<div style="position:absolute;left:34px;top:655px;width:14px;height:14px;background:#fff;box-shadow:0 0 0 0.6px #243246;"></div>
<svg style="position:absolute;left:34px;top:655px" width="14" height="14" viewBox="0 0 14 14"><path d="M1.3 6.6L5.5 11.2L12.9 3.2" fill="none" stroke="#4a7ab0" stroke-width="1.9"/></svg>
<svg style="position:absolute;left:51px;top:654px" width="17" height="16" viewBox="0 0 17 16">
<path d="M8.2 1.4C10.4 1.4 11.6 3 11.6 4.8C11.6 6.4 12 7.4 13.4 8.2C15.2 9.2 15.6 11.2 14.8 12.7C13.9 14.4 11.8 14.9 10.2 14C9 13.3 7.4 13.3 6.2 14C4.6 14.9 2.5 14.4 1.6 12.7C0.8 11.2 1.2 9.2 3 8.2C4.4 7.4 4.8 6.4 4.8 4.8C4.8 3 6 1.4 8.2 1.4Z" fill="#0a0f18" stroke="#0a0f18" stroke-width="2.4" stroke-linejoin="round" opacity="0.85"/>
<path d="M8.2 1.4C10.4 1.4 11.6 3 11.6 4.8C11.6 6.4 12 7.4 13.4 8.2C15.2 9.2 15.6 11.2 14.8 12.7C13.9 14.4 11.8 14.9 10.2 14C9 13.3 7.4 13.3 6.2 14C4.6 14.9 2.5 14.4 1.6 12.7C0.8 11.2 1.2 9.2 3 8.2C4.4 7.4 4.8 6.4 4.8 4.8C4.8 3 6 1.4 8.2 1.4Z" fill="url(#molg)" stroke="#bfe0fa" stroke-width="0.7" stroke-linejoin="round"/></svg>
<span class="t" style="left:73.4px;top:657.09px;color:#fff;font-size:12px;line-height:12px;letter-spacing:-0.106px;">Carbon nanotube n = 5, m = 5, l = 400.00 Å</span>
<div style="position:absolute;left:11px;top:675px;width:13px;height:14px;box-sizing:border-box;border:2px solid #55647b;background:#313f53"></div>
<div style="position:absolute;left:14.6px;top:681px;width:6.4px;height:2px;background:#c9d3de;"></div>
<div style="position:absolute;left:16.8px;top:678.2px;width:2px;height:7.6px;background:#c9d3de;"></div>
<div style="position:absolute;left:24px;top:681px;width:5px;height:2px;background:#55647b;"></div>
<div style="position:absolute;left:34px;top:675px;width:14px;height:14px;background:#fff;box-shadow:0 0 0 0.6px #243246;"></div>
<svg style="position:absolute;left:34px;top:675px" width="14" height="14" viewBox="0 0 14 14"><path d="M1.3 6.6L5.5 11.2L12.9 3.2" fill="none" stroke="#4a7ab0" stroke-width="1.9"/></svg>
<svg style="position:absolute;left:51px;top:674px" width="17" height="16" viewBox="0 0 17 16">
<path d="M8.2 1.4C10.4 1.4 11.6 3 11.6 4.8C11.6 6.4 12 7.4 13.4 8.2C15.2 9.2 15.6 11.2 14.8 12.7C13.9 14.4 11.8 14.9 10.2 14C9 13.3 7.4 13.3 6.2 14C4.6 14.9 2.5 14.4 1.6 12.7C0.8 11.2 1.2 9.2 3 8.2C4.4 7.4 4.8 6.4 4.8 4.8C4.8 3 6 1.4 8.2 1.4Z" fill="#0a0f18" stroke="#0a0f18" stroke-width="2.4" stroke-linejoin="round" opacity="0.85"/>
<path d="M8.2 1.4C10.4 1.4 11.6 3 11.6 4.8C11.6 6.4 12 7.4 13.4 8.2C15.2 9.2 15.6 11.2 14.8 12.7C13.9 14.4 11.8 14.9 10.2 14C9 13.3 7.4 13.3 6.2 14C4.6 14.9 2.5 14.4 1.6 12.7C0.8 11.2 1.2 9.2 3 8.2C4.4 7.4 4.8 6.4 4.8 4.8C4.8 3 6 1.4 8.2 1.4Z" fill="url(#molg)" stroke="#bfe0fa" stroke-width="0.7" stroke-linejoin="round"/></svg>
<span class="t" style="left:73.4px;top:677.09px;color:#fff;font-size:12px;line-height:12px;letter-spacing:-0.106px;">Carbon nanotube n = 5, m = 5, l = 400.00 Å</span>
<div style="position:absolute;left:9px;top:788px;width:326px;height:42px;background:#316b67;"></div>
<svg style="position:absolute;left:15px;top:794px" width="31" height="31" viewBox="0 0 31 31">
<defs><radialGradient id="sb" cx="0.4" cy="0.3" r="0.75"><stop offset="0" stop-color="#f4f8fc"/><stop offset="0.55" stop-color="#a7c4e2"/><stop offset="1" stop-color="#5c7ea6"/></radialGradient></defs>
<path d="M1 9V2.5Q1 1 2.5 1H12M19 1H28.5Q30 1 30 2.5V9M30 22V28.5Q30 30 28.5 30H19M12 30H2.5Q1 30 1 28.5V22" fill="none" stroke="#9dbfe6" stroke-width="1.6"/>
<circle cx="10.3" cy="10.3" r="5.1" fill="url(#sb)" stroke="#2a4360" stroke-width="0.6"/>
<circle cx="20.6" cy="15.6" r="5.1" fill="url(#sb)" stroke="#2a4360" stroke-width="0.6"/>
<circle cx="10.8" cy="21" r="5.1" fill="url(#sb)" stroke="#2a4360" stroke-width="0.6"/></svg>
<span class="t" style="left:62.2px;top:804.09px;color:#8db3ab;font-size:12px;line-height:12px;font-weight:bold;letter-spacing:-0.095px;">Current selection: empty</span>
<div style="position:absolute;left:0px;top:843px;width:344px;height:31px;background:#435b79;"></div>
<div style="position:absolute;left:0px;top:874px;width:344px;height:127px;background:#313f53;box-sizing:border-box;border:1px solid #3d5170;border-top:none;"></div>
<div style="position:absolute;left:0px;top:874px;width:1px;height:127px;background:#3f5676;"></div>
<svg style="position:absolute;left:4px;top:849px" width="24" height="21" viewBox="0 0 24 21">
<g stroke="#0d1320" stroke-width="3" opacity="0.45" transform="translate(0.6,0.9)"><path d="M1.5 2.5H10.5M1.5 7H10.5M1.5 11.5H10.5M1.5 16H10.5"/></g>
<path d="M1.5 2.2H10.5" stroke="#f3f7fb" stroke-width="1.6"/><path d="M1.5 6.8H10.5" stroke="#dbe8f6" stroke-width="1.6"/>
<path d="M1.5 11.4H10.5" stroke="#c3daf3" stroke-width="1.6"/><path d="M1.5 16H10.5" stroke="#a9cdf4" stroke-width="1.6"/>
<path d="M15.5 18.5C21 17 23.5 9 17.5 3.6" fill="none" stroke="#0d1320" stroke-width="3.2" opacity="0.4" transform="translate(0.6,0.9)"/>
<path d="M15.3 18.5C21 17 23.5 9 17.5 3.6" fill="none" stroke="#b5d4f5" stroke-width="1.7"/>
<path d="M13.5 3.2L19.2 1.4L18.6 6.8Z" fill="#b5d4f5"/></svg>
<span class="t" style="left:41.6px;top:854.09px;color:#fff;font-size:12px;line-height:12px;-webkit-text-stroke:0.45px #fff;letter-spacing:0.408px;">History</span>
<svg style="position:absolute;left:300px;top:853px" width="15" height="11" viewBox="0 0 15 11">
<g stroke="#27354b" stroke-width="2.2" stroke-linejoin="round" stroke-linecap="round" fill="#27354b">
<path d="M1 5.5H8"/><path d="M8 0.9C8.6 2 9.8 2.2 10.4 1.6L13.4 0.8C13 3.5 13 7.5 13.4 10.2L10.4 9.4C9.8 8.8 8.6 9 8 10.1Z"/></g>
<path d="M1 5.5H8" stroke="#6a99cf" stroke-width="1.2" stroke-linecap="round"/>
<path d="M8 0.9C8.6 2 9.8 2.2 10.4 1.6L13.4 0.8C13 3.5 13 7.5 13.4 10.2L10.4 9.4C9.8 8.8 8.6 9 8 10.1Z" fill="#6a99cf"/></svg>
<svg style="position:absolute;left:319px;top:852px" width="13" height="13" viewBox="0 0 13 13">
<path d="M1.2 1.2L11.8 11.8M11.8 1.2L1.2 11.8" stroke="#27354b" stroke-width="2.8" stroke-linecap="round"/>
<path d="M1.2 1.2L11.8 11.8M11.8 1.2L1.2 11.8" stroke="#6a99cf" stroke-width="1.5" stroke-linecap="round"/></svg>
<div style="position:absolute;left:13px;top:934px;width:326px;height:20px;background:#4f7db2;"></div>
<span class="t" style="left:13.3px;top:879.09px;color:#fff;font-size:12px;line-height:12px;letter-spacing:0.238px;">New document</span>
<span class="t" style="left:13.3px;top:899.09px;color:#fff;font-size:12px;line-height:12px;letter-spacing:0.171px;">Add nanotube</span>
<span class="t" style="left:13.3px;top:919.09px;color:#fff;font-size:12px;line-height:12px;letter-spacing:-0.085px;">Replicate nanotubes</span>
<span class="t" style="left:13.3px;top:939.09px;color:#fff;font-size:12px;line-height:12px;letter-spacing:-0.085px;">Replicate nanotubes</span>
<div style="position:absolute;left:348px;top:177px;width:866px;height:824px;background:linear-gradient(#54687d,#9bbee4);overflow:hidden">
<svg style="position:absolute;left:0;top:0" width="866" height="824" viewBox="0 0 866 824"><defs>
<filter id="nzv" x="-2%" y="-2%" width="104%" height="104%" color-interpolation-filters="sRGB">
<feTurbulence type="fractalNoise" baseFrequency="0.6 0.4" numOctaves="2" seed="4" result="n"/>
<feColorMatrix in="n" type="matrix" values="0 0 0 0 0  0 0 0 0 0  0 0 0 0 0  3.4 0 0 0 -1.22" result="a"/>
<feComposite in="SourceGraphic" in2="a" operator="in"/></filter>
<filter id="nzh" x="-2%" y="-2%" width="104%" height="104%" color-interpolation-filters="sRGB">
<feTurbulence type="fractalNoise" baseFrequency="0.4 0.6" numOctaves="2" seed="11" result="n"/>
<feColorMatrix in="n" type="matrix" values="0 0 0 0 0  0 0 0 0 0  0 0 0 0 0  3.4 0 0 0 -1.22" result="a"/>
<feComposite in="SourceGraphic" in2="a" operator="in"/></filter>
</defs>
<g fill="#414c58" fill-opacity="0.40"><rect x="172.7" y="174.1" width="520.3" height="9.8"/><rect x="172.7" y="225.9" width="520.3" height="9.8"/><rect x="172.7" y="277.8" width="520.3" height="9.8"/><rect x="172.7" y="329.7" width="520.3" height="9.8"/><rect x="172.7" y="381.5" width="520.3" height="9.8"/><rect x="172.7" y="433.4" width="520.3" height="9.8"/><rect x="172.7" y="485.2" width="520.3" height="9.8"/><rect x="172.7" y="537.1" width="520.3" height="9.8"/><rect x="172.7" y="588.9" width="520.3" height="9.8"/><rect x="172.7" y="640.8" width="520.3" height="9.8"/></g>
<g fill="#323b45" filter="url(#nzh)"><rect x="172.7" y="174.1" width="520.3" height="9.8"/><rect x="172.7" y="225.9" width="520.3" height="9.8"/><rect x="172.7" y="277.8" width="520.3" height="9.8"/><rect x="172.7" y="329.7" width="520.3" height="9.8"/><rect x="172.7" y="381.5" width="520.3" height="9.8"/><rect x="172.7" y="433.4" width="520.3" height="9.8"/><rect x="172.7" y="485.2" width="520.3" height="9.8"/><rect x="172.7" y="537.1" width="520.3" height="9.8"/><rect x="172.7" y="588.9" width="520.3" height="9.8"/><rect x="172.7" y="640.8" width="520.3" height="9.8"/></g>
<path d="M172.7 174.5H693.0M172.7 183.5H693.0M172.7 226.3H693.0M172.7 235.3H693.0M172.7 278.2H693.0M172.7 287.2H693.0M172.7 330.1H693.0M172.7 339.1H693.0M172.7 381.9H693.0M172.7 390.9H693.0M172.7 433.8H693.0M172.7 442.8H693.0M172.7 485.6H693.0M172.7 494.6H693.0M172.7 537.5H693.0M172.7 546.5H693.0M172.7 589.3H693.0M172.7 598.3H693.0M172.7 641.2H693.0M172.7 650.2H693.0" stroke="#303a45" stroke-width="1" stroke-opacity="0.55"/>
<g fill="#414c58" fill-opacity="0.40"><rect x="193.1" y="150.6" width="9.8" height="519.8"/><rect x="244.9" y="150.6" width="9.8" height="519.8"/><rect x="296.8" y="150.6" width="9.8" height="519.8"/><rect x="348.7" y="150.6" width="9.8" height="519.8"/><rect x="400.5" y="150.6" width="9.8" height="519.8"/><rect x="452.4" y="150.6" width="9.8" height="519.8"/><rect x="504.2" y="150.6" width="9.8" height="519.8"/><rect x="556.1" y="150.6" width="9.8" height="519.8"/><rect x="607.9" y="150.6" width="9.8" height="519.8"/><rect x="659.8" y="150.6" width="9.8" height="519.8"/></g>
<g fill="#323b45" filter="url(#nzv)"><rect x="193.1" y="150.6" width="9.8" height="519.8"/><rect x="244.9" y="150.6" width="9.8" height="519.8"/><rect x="296.8" y="150.6" width="9.8" height="519.8"/><rect x="348.7" y="150.6" width="9.8" height="519.8"/><rect x="400.5" y="150.6" width="9.8" height="519.8"/><rect x="452.4" y="150.6" width="9.8" height="519.8"/><rect x="504.2" y="150.6" width="9.8" height="519.8"/><rect x="556.1" y="150.6" width="9.8" height="519.8"/><rect x="607.9" y="150.6" width="9.8" height="519.8"/><rect x="659.8" y="150.6" width="9.8" height="519.8"/></g>
<path d="M193.5 150.6V670.4M202.5 150.6V670.4M245.3 150.6V670.4M254.3 150.6V670.4M297.2 150.6V670.4M306.2 150.6V670.4M349.1 150.6V670.4M358.1 150.6V670.4M400.9 150.6V670.4M409.9 150.6V670.4M452.8 150.6V670.4M461.8 150.6V670.4M504.6 150.6V670.4M513.6 150.6V670.4M556.5 150.6V670.4M565.5 150.6V670.4M608.3 150.6V670.4M617.3 150.6V670.4M660.2 150.6V670.4M669.2 150.6V670.4" stroke="#303a45" stroke-width="1" stroke-opacity="0.55"/><path d="M99.5 631.0L107.5 644.0L91.5 644.0Z" fill="#5f8cba"/>
<path d="M91.5 804.5L107.5 804.5L99.5 818.0Z" fill="#5f8cba"/>
<path d="M5.8 724.0L19.0 716.0L19.0 732.0Z" fill="#5f8cba"/>
<path d="M193.2 724.0L180.0 716.0L180.0 732.0Z" fill="#5f8cba"/>
<path d="M77.5 639.0Q56.0 645.0 43.0 657.0" fill="none" stroke="#5f8cba" stroke-width="4.6"/>
<path d="M35.5 664.0L40.5 649.5L50.5 661.6Z" fill="#5f8cba"/>
<path d="M121.5 639.0Q143.0 645.0 156.0 657.0" fill="none" stroke="#5f8cba" stroke-width="4.6"/>
<path d="M164.0 664.0L159.0 649.5L149.0 661.6Z" fill="#5f8cba"/>
<path d="M97.5 681.0V666.5H94L99.6 655.6L105.6 666.5H101.80000000000001V681Z" fill="#3fa84a"/>
<path d="M142.0 721.8H156V717.6L169.8 724.0L156.0 730.6V726.4H142Z" fill="#f47a3c"/>
<path d="M59.3 698.6L68.5 688.4L75.2 682.7L124.9 682.0L137.2 689.4L141.8 697.6L142.8 744.7L137.2 753.9L124.9 765.2L77.7 767.1L65.4 763.2L57.2 751.9L56.0 714.0Z" fill="#4d7199" stroke="#4d7199" stroke-width="2" stroke-linejoin="round"/>
<path d="M70.1 686.8L75.2 682.2L124.9 681.6L127.4 683.5L122.8 686.8L87.0 688.4Z" fill="#6191c3" stroke="#6191c3" stroke-width="1.2" stroke-linejoin="round"/>
<path d="M71.6 766.0L77.7 760.3L112.6 760.3L117.7 764.2L125.4 764.4L122.8 766.4L77.7 767.5Z" fill="#6191c3" stroke="#6191c3" stroke-width="1.2" stroke-linejoin="round"/>
<path d="M57.2 699.6L59.3 710.9L64.9 711.9L63.9 744.7L58.5 752.4L56.2 744.7L56.0 714.0Z" fill="#47698f" stroke="#47698f" stroke-width="1.2" stroke-linejoin="round"/>
<path d="M137.4 700.2L141.1 696.8L142.9 703.7L142.5 744.7L137.4 753.4L135.3 748.8L136.1 714.0Z" fill="#47698f" stroke="#47698f" stroke-width="1.2" stroke-linejoin="round"/>
<path d="M64.9 709.9L87.0 688.6L122.8 687.5L134.9 701.9L134.9 738.6L113.6 760.1L77.7 760.1L64.1 746.8Z" fill="#98bbe3" stroke="#98bbe3" stroke-width="1.2" stroke-linejoin="round"/>
<path d="M67.5 714.5L77.7 702.9L90.0 693.5L112.6 693.5L121.6 702.9L131.6 714.5L131.2 734.5L120.8 744.7L112.6 755.6L77.7 756.0L67.9 748.6Z" fill="#5f8fbf" stroke="#5f8fbf" stroke-width="4" stroke-linejoin="round"/>
<path d="M61.3 691.6L75.7 691.1L77.0 694.5L71.6 702.7L62.4 710.7L59.1 708.9L59.9 696.8Z" fill="#76abe3" stroke="#76abe3" stroke-width="2" stroke-linejoin="round"/>
<path d="M68.0 688.6L86.4 688.6L77.7 696.4L77.2 693.5L75.9 690.8Z" fill="#4e749f" stroke="#4e749f" stroke-width="0.8" stroke-linejoin="round"/>
<path d="M114.1 691.9L132.9 691.2L133.9 698.6L130.8 710.7L128.1 711.1L113.8 696.8Z" fill="#4e749f" stroke="#4e749f" stroke-width="2.5" stroke-linejoin="round"/>
<path d="M123.3 686.9L129.0 685.5L137.0 689.6L138.5 698.6L135.3 701.5L134.3 691.6Z" fill="#4e749f" stroke="#4e749f" stroke-width="1" stroke-linejoin="round"/>
<path d="M59.1 747.0L62.4 746.5L77.5 762.1L76.7 764.5L65.6 763.0L61.0 759.1Z" fill="#47698f" stroke="#47698f" stroke-width="2" stroke-linejoin="round"/>
<path d="M124.9 751.9L134.9 738.6L135.9 755.0L134.1 757.0Z" fill="#7db3ea" stroke="#7db3ea" stroke-width="1" stroke-linejoin="round"/>
<path d="M113.1 762.3L131.0 746.6L133.9 749.0L133.9 758.0L124.9 764.0L113.8 764.5Z" fill="#47698f" stroke="#47698f" stroke-width="2.5" stroke-linejoin="round"/>
<path d="M85.9 725.5L92.6 728.8L90.0 733.5Z" fill="#7db9f5" stroke="#7db9f5" stroke-width="0.5" stroke-linejoin="round"/>
<path d="M90.0 730.4L92.6 728.1L96.0 731.4L93.6 733.5L97.9 737.3L90.0 733.5Z" fill="#3d76cf" stroke="#3d76cf" stroke-width="0.5" stroke-linejoin="round"/></svg>
</div>
<div style="position:absolute;left:354px;top:183px;width:468px;height:32px;background:#313f53;border-radius:4px;"></div>
<span class="t" style="left:359px;top:194.09px;color:#fff;font-size:12px;line-height:12px;letter-spacing:0.008px;">Selection filter</span>
<div style="position:absolute;left:440px;top:188px;width:212px;height:22px;background:#fff;"></div>
<svg style="position:absolute;left:445px;top:191px" width="16" height="16" viewBox="0 0 16 16">
<defs><radialGradient id="ab" cx="0.35" cy="0.3" r="0.8"><stop offset="0" stop-color="#fafafa"/><stop offset="1" stop-color="#9a9da1"/></radialGradient></defs>
<path d="M8 9L11.5 13" stroke="#5e86b8" stroke-width="2.6"/>
<circle cx="11.8" cy="12.6" r="2.6" fill="url(#ab)" stroke="#5b5e63" stroke-width="0.7"/>
<circle cx="6" cy="6" r="5" fill="url(#ab)" stroke="#5b5e63" stroke-width="0.8"/></svg>
<span class="t" style="left:464.4px;top:194.09px;color:#000;font-size:12px;line-height:12px;letter-spacing:0.033px;">Atoms and bonds</span>
<svg style="position:absolute;left:628px;top:195px" width="12" height="10" viewBox="0 0 12 10"><path d="M0 0h12l-6 10z" fill="#4a7bb5"/></svg>
<svg style="position:absolute;left:661px;top:187px" width="24" height="24" viewBox="0 0 24 24"><defs><radialGradient id="sg" cx="0.4" cy="0.3" r="0.75"><stop offset="0" stop-color="#f4f8fc"/><stop offset="0.55" stop-color="#a7c4e2"/><stop offset="1" stop-color="#5c7ea6"/></radialGradient></defs><path d="M1 8V2.2Q1 1 2.2 1H8.5M15.5 1H21.8Q23 1 23 2.2V8M23 16V21.8Q23 23 21.8 23H15.5M8.5 23H2.2Q1 23 1 21.8V16" fill="none" stroke="#9dbfe6" stroke-width="1.4"/><circle cx="8.2" cy="8" r="3.9" fill="url(#sg)"/><circle cx="16.2" cy="12" r="3.9" fill="url(#sg)"/><circle cx="8.6" cy="16.4" r="3.9" fill="url(#sg)"/></svg>
<svg style="position:absolute;left:694px;top:187px" width="24" height="24" viewBox="0 0 24 24"><defs><radialGradient id="sg" cx="0.4" cy="0.3" r="0.75"><stop offset="0" stop-color="#f4f8fc"/><stop offset="0.55" stop-color="#a7c4e2"/><stop offset="1" stop-color="#5c7ea6"/></radialGradient></defs><path d="M1 8V2.2Q1 1 2.2 1H8.5M15.5 1H21.8Q23 1 23 2.2V8M23 16V21.8Q23 23 21.8 23H15.5M8.5 23H2.2Q1 23 1 21.8V16" fill="none" stroke="#9dbfe6" stroke-width="1.4"/><path d="M7.5 7.5L16.5 16.5M16.5 7.5L7.5 16.5" stroke="#0d1320" stroke-width="4.6" stroke-linecap="round" opacity="0.55" transform="translate(0.5,0.8)"/><path d="M7.5 7.5L16.5 16.5M16.5 7.5L7.5 16.5" stroke="#fff" stroke-width="2.8" stroke-linecap="round"/></svg>
<svg style="position:absolute;left:727px;top:187px" width="24" height="24" viewBox="0 0 24 24"><defs><radialGradient id="sg" cx="0.4" cy="0.3" r="0.75"><stop offset="0" stop-color="#f4f8fc"/><stop offset="0.55" stop-color="#a7c4e2"/><stop offset="1" stop-color="#5c7ea6"/></radialGradient></defs><path d="M1 8V2.2Q1 1 2.2 1H8.5M15.5 1H21.8Q23 1 23 2.2V8M23 16V21.8Q23 23 21.8 23H15.5M8.5 23H2.2Q1 23 1 21.8V16" fill="none" stroke="#9dbfe6" stroke-width="1.4"/><path d="M12 4.5L19 12H15V19H9V12H5Z" fill="#0d1320" opacity="0.5" transform="translate(0.6,0.9)"/><path d="M12 4.5L19 12H15V19H9V12H5Z" fill="#b9d6f5" stroke="#e7f0fa" stroke-width="0.6"/></svg>
<svg style="position:absolute;left:760px;top:187px" width="24" height="24" viewBox="0 0 24 24"><defs><radialGradient id="sg" cx="0.4" cy="0.3" r="0.75"><stop offset="0" stop-color="#f4f8fc"/><stop offset="0.55" stop-color="#a7c4e2"/><stop offset="1" stop-color="#5c7ea6"/></radialGradient></defs><path d="M1 8V2.2Q1 1 2.2 1H8.5M15.5 1H21.8Q23 1 23 2.2V8M23 16V21.8Q23 23 21.8 23H15.5M8.5 23H2.2Q1 23 1 21.8V16" fill="none" stroke="#9dbfe6" stroke-width="1.4"/><circle cx="8" cy="8" r="3.6" fill="url(#sg)"/><circle cx="14.6" cy="8.6" r="3.3" fill="url(#sg)"/><circle cx="9.4" cy="14.6" r="4.4" fill="url(#sg)"/><path d="M17 11.5V20.5M12.5 16H21.5" stroke="#0d1320" stroke-width="4.2" opacity="0.6"/><path d="M17 12V20M13 16H21" stroke="#fff" stroke-width="2.4"/></svg>
<svg style="position:absolute;left:796px;top:190px" width="19" height="19" viewBox="0 0 20 20">
<defs><radialGradient id="mg3" cx="0.38" cy="0.3" r="0.75"><stop offset="0" stop-color="#cfe2f7"/><stop offset="1" stop-color="#8fb6e6"/></radialGradient></defs>
<path d="M12.6 12.6L17 17" stroke="#0b0f16" stroke-width="4.4" stroke-linecap="round" opacity="0.22" transform="translate(0.6,0.8)"/>
<path d="M12.4 12.4L17 17" stroke="#5d6166" stroke-width="3.7" stroke-linecap="round"/>
<path d="M13 13L16.9 16.9" stroke="#fbfbfb" stroke-width="1.9" stroke-linecap="round"/>
<circle cx="8" cy="8" r="6.6" fill="#f1f2f3" stroke="#55595f" stroke-width="0.8"/><circle cx="8" cy="8" r="5.4" fill="url(#mg3)" stroke="#9a9da2" stroke-width="0.5"/>
</svg>
<div style="position:absolute;left:1176px;top:557px;width:32px;height:64px;background:#313f53;border-radius:4px;"></div>
<svg style="position:absolute;left:1181.5px;top:564.6px" width="21" height="17" viewBox="0 0 16 13">
<rect x="0.4" y="0.4" width="15.2" height="12.2" rx="1.2" fill="#141b27"/>
<rect x="1.1" y="1.1" width="13.8" height="10.8" rx="0.8" fill="#7099c9"/>
<rect x="2.1" y="2.1" width="11.8" height="8.4" fill="#fdfdfd"/>
<text x="2.7" y="9.7" font-family="Liberation Sans" font-size="9" fill="#0a0a0a" stroke="#0a0a0a" stroke-width="0.25" letter-spacing="-0.5">Aa</text></svg>
<svg style="position:absolute;left:1181.5px;top:596.8px" width="21" height="17" viewBox="0 0 16 13">
<rect x="0.4" y="0.4" width="15.2" height="12.2" rx="1.2" fill="#141b27"/>
<rect x="1.1" y="1.1" width="13.8" height="10.8" rx="0.6" fill="#80acdd"/>
<rect x="1.1" y="1.1" width="13.8" height="4.4" fill="#a3c6ec"/>
<path d="M3.2 1.1v4.2M5.6 1.1v3M8 1.1v5.6M10.4 1.1v3M12.8 1.1v4.2" stroke="#3b5878" stroke-width="0.9"/></svg>
<div style="position:absolute;left:1033px;top:950px;width:132px;height:4px;background:#2c3540;border-radius:1px;"></div>
<div style="position:absolute;left:1034px;top:951px;width:130px;height:2px;background:#fff;"></div>
<span class="t" style="left:1072px;top:912.32px;color:#fff;font-size:20px;line-height:20px;font-weight:bold;letter-spacing:-0.443px;text-shadow:-1px -1px 0 #323b47,1px -1px 0 #323b47,-1px 1px 0 #323b47,1px 1px 0 #323b47,0 1.2px 0 #323b47,0 -1.2px 0 #323b47,1.2px 0 0 #323b47,-1.2px 0 0 #323b47;">10 nm</span>
<div style="position:absolute;left:550px;top:963px;width:462px;height:32px;background:#313f53;border-radius:4px;"></div>
<div style="position:absolute;left:716px;top:964px;width:31px;height:30px;background:#52667f;"></div>
<div style="position:absolute;left:782px;top:964px;width:31px;height:30px;background:#52667f;"></div>
<div style="position:absolute;left:554px;top:967px;width:24px;height:24px;background:transparent;box-sizing:border-box;border:1px solid #9dc3ee;border-radius:1px;"></div>
<svg style="position:absolute;left:557px;top:969.5px" width="19" height="19" viewBox="0 0 20 20">
<defs><radialGradient id="mg4" cx="0.38" cy="0.3" r="0.75"><stop offset="0" stop-color="#d5e6f8"/><stop offset="1" stop-color="#a6c8ee"/></radialGradient></defs>
<path d="M12.6 12.6L17 17" stroke="#0b0f16" stroke-width="4.4" stroke-linecap="round" opacity="0.22" transform="translate(0.6,0.8)"/>
<path d="M12.4 12.4L17 17" stroke="#5d6166" stroke-width="3.7" stroke-linecap="round"/>
<path d="M13 13L16.9 16.9" stroke="#fbfbfb" stroke-width="1.9" stroke-linecap="round"/>
<circle cx="8" cy="8" r="6.6" fill="#f1f2f3" stroke="#55595f" stroke-width="0.8"/><circle cx="8" cy="8" r="5.4" fill="url(#mg4)" stroke="#9a9da2" stroke-width="0.5"/>
</svg>
<svg style="position:absolute;left:587px;top:967px" width="24" height="24" viewBox="0 0 24 24"><path d="M0.5 8V0.5H9M15 0.5H23.5V8M23.5 16V23.5H15M9 23.5H0.5V16" fill="none" stroke="#9dc3ee" stroke-width="1.1"/></svg>
<svg style="position:absolute;left:590px;top:969.5px" width="19" height="19" viewBox="0 0 20 20">
<defs><radialGradient id="mg5" cx="0.38" cy="0.3" r="0.75"><stop offset="0" stop-color="#d5e6f8"/><stop offset="1" stop-color="#a6c8ee"/></radialGradient></defs>
<path d="M12.6 12.6L17 17" stroke="#0b0f16" stroke-width="4.4" stroke-linecap="round" opacity="0.22" transform="translate(0.6,0.8)"/>
<path d="M12.4 12.4L17 17" stroke="#5d6166" stroke-width="3.7" stroke-linecap="round"/>
<path d="M13 13L16.9 16.9" stroke="#fbfbfb" stroke-width="1.9" stroke-linecap="round"/>
<circle cx="8" cy="8" r="6.6" fill="#f1f2f3" stroke="#55595f" stroke-width="0.8"/><circle cx="8" cy="8" r="5.4" fill="url(#mg5)" stroke="#9a9da2" stroke-width="0.5"/>
</svg>
<svg style="position:absolute;left:623px;top:970px" width="19" height="19" viewBox="0 0 20 20">
<defs><radialGradient id="mg6" cx="0.38" cy="0.3" r="0.75"><stop offset="0" stop-color="#cfe2f7"/><stop offset="1" stop-color="#8fb6e6"/></radialGradient></defs>
<path d="M12.6 12.6L17 17" stroke="#0b0f16" stroke-width="4.4" stroke-linecap="round" opacity="0.22" transform="translate(0.6,0.8)"/>
<path d="M12.4 12.4L17 17" stroke="#5d6166" stroke-width="3.7" stroke-linecap="round"/>
<path d="M13 13L16.9 16.9" stroke="#fbfbfb" stroke-width="1.9" stroke-linecap="round"/>
<circle cx="8" cy="8" r="6.6" fill="#f1f2f3" stroke="#55595f" stroke-width="0.8"/><circle cx="8" cy="8" r="5.4" fill="url(#mg6)" stroke="#9a9da2" stroke-width="0.5"/>
</svg>
<svg style="position:absolute;left:623px;top:970px" width="19" height="19" viewBox="0 0 20 20"><path d="M4.5 8H11.5M8 4.5V11.5" stroke="#fff" stroke-width="2"/></svg>
<svg style="position:absolute;left:656px;top:970px" width="19" height="19" viewBox="0 0 20 20">
<defs><radialGradient id="mg7" cx="0.38" cy="0.3" r="0.75"><stop offset="0" stop-color="#cfe2f7"/><stop offset="1" stop-color="#8fb6e6"/></radialGradient></defs>
<path d="M12.6 12.6L17 17" stroke="#0b0f16" stroke-width="4.4" stroke-linecap="round" opacity="0.22" transform="translate(0.6,0.8)"/>
<path d="M12.4 12.4L17 17" stroke="#5d6166" stroke-width="3.7" stroke-linecap="round"/>
<path d="M13 13L16.9 16.9" stroke="#fbfbfb" stroke-width="1.9" stroke-linecap="round"/>
<circle cx="8" cy="8" r="6.6" fill="#f1f2f3" stroke="#55595f" stroke-width="0.8"/><circle cx="8" cy="8" r="5.4" fill="url(#mg7)" stroke="#9a9da2" stroke-width="0.5"/>
</svg>
<svg style="position:absolute;left:656px;top:970px" width="19" height="19" viewBox="0 0 20 20"><path d="M4.5 8H11.5" stroke="#fff" stroke-width="2"/></svg>
<div style="position:absolute;left:687.5px;top:968px;width:21.5px;height:22px;background:linear-gradient(#5d748e,#9ab9df);border-radius:2.5px;box-shadow:0 0 0 1.2px #1a2433;"></div>
<svg style="position:absolute;left:718px;top:966px" width="27" height="27" viewBox="0 0 27 27"><path d="M12.78 0.35L20.85 3.27L24.40 7.65L25.12 11.71L24.71 19.00L20.85 23.17L12.78 25.41L5.23 23.17L1.17 19.00L0.85 9.62L3.77 4.42Z" fill="#4b79ad" stroke="#4b79ad" stroke-width="1.2" stroke-linejoin="round"/><path d="M12.78 0.67L19.71 4.00L20.23 7.02L12.78 11.08L5.33 7.02L4.81 4.00Z" fill="#6aa0d8" stroke="#6aa0d8" stroke-width="0.6" stroke-linejoin="round"/><path d="M24.50 9.62L20.33 7.12L13.04 11.19L14.71 15.88L14.71 24.62L20.85 22.80L24.66 19.00Z" fill="#4f80b6" stroke="#4f80b6" stroke-width="0.6" stroke-linejoin="round"/><path d="M1.17 9.62L5.33 7.12L12.62 11.19L10.96 15.88L10.96 24.62L5.33 22.80L1.17 19.00Z" fill="#4a76a9" stroke="#4a76a9" stroke-width="0.6" stroke-linejoin="round"/><path d="M9.14 11.97L12.78 11.19L16.43 11.97L14.71 16.92L14.71 24.83L12.78 25.25L10.96 24.83L10.96 16.92Z" fill="#6a9fd6" stroke="#6a9fd6" stroke-width="0.6" stroke-linejoin="round"/><path d="M1.17 9.62L3.67 5.20L4.45 7.54Z" fill="#7db3ea" stroke="#7db3ea" stroke-width="0.6" stroke-linejoin="round"/><path d="M6.69 12.49L9.71 10.56L9.08 12.49L9.71 14.62Z" fill="#25303f" stroke="#25303f" stroke-width="0.3" stroke-linejoin="round"/><path d="M18.88 12.49L15.85 10.56L16.48 12.49L15.85 14.62Z" fill="#25303f" stroke="#25303f" stroke-width="0.3" stroke-linejoin="round"/><path d="M12.78 1.03L14.19 2.75L13.30 2.75L13.30 4.83L12.26 4.83L12.26 2.75L11.38 2.75Z" fill="#3b7de0" stroke="#3b7de0" stroke-width="0.3" stroke-linejoin="round"/><path d="M0.96 21.19L3.67 18.48L5.75 18.06L4.81 20.04L3.15 21.71Z" fill="#f0622a" stroke="#f0622a" stroke-width="0.4" stroke-linejoin="round"/><path d="M24.81 20.98L22.42 21.08L20.23 17.70L21.90 18.06Z" fill="#57e27c" stroke="#57e27c" stroke-width="0.4" stroke-linejoin="round"/></svg>
<svg style="position:absolute;left:751px;top:968px" width="26" height="23" viewBox="0 0 26 23">
<defs><clipPath id="gpc"><path d="M4.4 0.9H21.6Q22.5 0.9 22.6 1.8L24 19.4Q24.1 21.2 22.8 21.2H3.1Q1.8 21.2 1.9 19.4L3.4 1.8Q3.5 0.9 4.4 0.9Z"/></clipPath></defs>
<path d="M4.4 0.9H21.6Q22.5 0.9 22.6 1.8L24 19.4Q24.1 21.2 22.8 21.2H3.1Q1.8 21.2 1.9 19.4L3.4 1.8Q3.5 0.9 4.4 0.9Z" fill="#0d1320" opacity="0.5" transform="translate(0.5,1)"/>
<g clip-path="url(#gpc)"><rect width="26" height="23" fill="#a9c1d5"/>
<path d="M6.5 0V23M9.5 0V23M15.8 0V23M18.8 0V23M0 4.5H26M0 14H26M0 18H26" stroke="#bcd0e0" stroke-width="0.5"/>
<path d="M12.7 0V23" stroke="#86c79a" stroke-width="0.9"/><path d="M0 9.4H26" stroke="#d59a90" stroke-width="0.6"/></g></svg>
<svg style="position:absolute;left:785px;top:966px" width="27" height="26" viewBox="0 0 27 26">
<g stroke-linejoin="round">
<path d="M7.6 6.4V19.6H5.4V9.4L2.6 11.2V9L6 6.4Z" fill="#0b1018" stroke="#0b1018" stroke-width="2.6" opacity="0.8"/>
<text x="9" y="19.6" font-family="Liberation Sans" font-size="18.5" fill="#0b1018" stroke="#0b1018" stroke-width="2.6" opacity="0.8">A</text>
<path d="M7.6 6.4V19.6H5.4V9.4L2.6 11.2V9L6 6.4Z" fill="#fff" stroke="#fff" stroke-width="0.3"/>
<text x="9" y="19.6" font-family="Liberation Sans" font-size="18.5" fill="#fff" stroke="#fff" stroke-width="0.5">A</text></g>
<circle cx="15.2" cy="3.1" r="1.6" fill="none" stroke="#0b1018" stroke-width="2.6" opacity="0.7"/>
<circle cx="15.2" cy="3.1" r="1.6" fill="none" stroke="#fff" stroke-width="1.1"/>
<path d="M1 23H23.5" stroke="#0b1018" stroke-width="3.6" opacity="0.7"/><path d="M1.6 22.8H23" stroke="#fff" stroke-width="1.9"/></svg>
<svg style="position:absolute;left:820px;top:968px" width="22" height="22" viewBox="0 0 22 22">
<path d="M0.5 4.5H4.5L6 2H12.5L14 4.5H18V14H0.5Z" fill="#9dc3ee" stroke="#10151d" stroke-width="0.8"/>
<rect x="7" y="2.4" width="4.4" height="1.8" fill="#d9dde2"/>
<circle cx="9" cy="9" r="3.6" fill="#2a2e36"/><circle cx="9" cy="9" r="2" fill="#cfcac6"/>
<path d="M9.5 9.5H20L21.5 11V21.5H9.5Z" fill="#8fb6e4" stroke="#10151d" stroke-width="0.8"/>
<rect x="12" y="10" width="6.4" height="4.4" fill="#2a2e36"/><rect x="15.6" y="10.6" width="1.8" height="3.2" fill="#d9dde2"/>
<rect x="11.4" y="16" width="8.2" height="5" fill="#efe8cf"/></svg>
<svg style="position:absolute;left:853px;top:967px" width="24" height="24" viewBox="0 0 24 24">
<rect x="7.5" y="1.5" width="14" height="13" fill="#8fb6e4" stroke="#10151d" stroke-width="0.8"/>
<path d="M9.5 4H19.5M9.5 6.5H19.5M9.5 9H19.5M9.5 11.5H19.5" stroke="#5a88c0" stroke-width="1"/>
<circle cx="4.4" cy="19" r="3.2" fill="#e4e4e4" stroke="#55595f" stroke-width="0.7"/></svg>
<svg style="position:absolute;left:885px;top:969px" width="22" height="20" viewBox="0 0 22 20">
<rect x="0.5" y="0.5" width="20.5" height="18.5" fill="#8fb6e4" stroke="#10151d" stroke-width="0.9"/>
<rect x="2.2" y="4.4" width="17.2" height="7.6" fill="#5f8ec6"/>
<path d="M2.2 2.4H19.4M2.2 14.2H19.4M2.2 16.4H19.4" stroke="#5f8ec6" stroke-width="0.9"/></svg>
<svg style="position:absolute;left:918px;top:971px" width="22" height="16" viewBox="0 0 22 16">
<path d="M0.8 8Q11 -3.5 21.2 8Q11 19.5 0.8 8Z" fill="#d4e6f9" stroke="#10151d" stroke-width="0.9"/>
<circle cx="11" cy="8" r="4.8" fill="#1c2738"/><circle cx="11" cy="8" r="2.5" fill="#d4e6f9"/><circle cx="11" cy="8" r="1.1" fill="#1c2738"/></svg>
<svg style="position:absolute;left:953px;top:970px" width="18" height="18" viewBox="0 0 18 18">
<g fill="#cfe3f8" stroke="#10151d" stroke-width="0.5">
<path d="M0.5 0.5H6.5L4.6 2.4L7.6 5.4L5.4 7.6L2.4 4.6L0.5 6.5Z"/>
<path d="M17.5 0.5V6.5L15.6 4.6L12.6 7.6L10.4 5.4L13.4 2.4L11.5 0.5Z"/>
<path d="M0.5 17.5V11.5L2.4 13.4L5.4 10.4L7.6 12.6L4.6 15.6L6.5 17.5Z"/>
<path d="M17.5 17.5H11.5L13.4 15.6L10.4 12.6L12.6 10.4L15.6 13.4L17.5 11.5Z"/></g></svg>
<svg style="position:absolute;left:987px;top:970px" width="16" height="18" viewBox="0 0 16 18">
<path d="M1.5 1.2L14.5 9L1.5 16.8Z" fill="#fff" stroke="#0b0f16" stroke-width="1.4" stroke-linejoin="round"/></svg>
<div style="position:absolute;left:1218px;top:177px;width:702px;height:31px;background:#435b79;"></div>
<div style="position:absolute;left:1218px;top:208px;width:702px;height:793px;background:#313f53;box-sizing:border-box;border:1px solid #3d5170;border-top:none;"></div>
<svg style="position:absolute;left:1221px;top:181px" width="27" height="24" viewBox="0 0 27 24">
<rect x="0.8" y="0.8" width="25" height="22" fill="#0d1320" opacity="0.5" transform="translate(0.6,0.8)"/>
<rect x="0.8" y="0.8" width="24.6" height="21.6" fill="#4a6280" stroke="#1a2433" stroke-width="0.9"/>
<rect x="1.4" y="1.4" width="23.4" height="9.6" fill="#6a85a6"/>
<path d="M1.4 1.9H24.8" stroke="#a9cdf4" stroke-width="1.3"/><path d="M1.4 21.2H24.8" stroke="#a9cdf4" stroke-width="1.3"/>
<text x="1.2" y="15" font-family="Liberation Mono" font-size="11.5" fill="#e6eaef" letter-spacing="-1.3">IP</text>
<text x="13.6" y="14.4" font-family="Liberation Sans" font-size="8" fill="#9fc0e4" letter-spacing="-0.3">[y]:</text></svg>
<span class="t" style="left:1259px;top:188.09px;color:#fff;font-size:12px;line-height:12px;-webkit-text-stroke:0.45px #fff;letter-spacing:0.338px;">Python Scripting</span>
<span class="t" style="left:1861px;top:183.86px;color:#6a99cf;font-size:17px;line-height:17px;font-weight:bold;text-shadow:-1px 0 0 #27354b,1px 0 0 #27354b,0 -1px 0 #27354b,0 1px 0 #27354b;transform:scaleX(0.86);transform-origin:left;">?</span>
<svg style="position:absolute;left:1876px;top:187px" width="15" height="11" viewBox="0 0 15 11">
<g stroke="#27354b" stroke-width="2.2" stroke-linejoin="round" stroke-linecap="round" fill="#27354b">
<path d="M1 5.5H8"/><path d="M8 0.9C8.6 2 9.8 2.2 10.4 1.6L13.4 0.8C13 3.5 13 7.5 13.4 10.2L10.4 9.4C9.8 8.8 8.6 9 8 10.1Z"/></g>
<path d="M1 5.5H8" stroke="#6a99cf" stroke-width="1.2" stroke-linecap="round"/>
<path d="M8 0.9C8.6 2 9.8 2.2 10.4 1.6L13.4 0.8C13 3.5 13 7.5 13.4 10.2L10.4 9.4C9.8 8.8 8.6 9 8 10.1Z" fill="#6a99cf"/></svg>
<svg style="position:absolute;left:1895px;top:186px" width="13" height="13" viewBox="0 0 13 13">
<path d="M1.2 1.2L11.8 11.8M11.8 1.2L1.2 11.8" stroke="#27354b" stroke-width="2.8" stroke-linecap="round"/>
<path d="M1.2 1.2L11.8 11.8M11.8 1.2L1.2 11.8" stroke="#6a99cf" stroke-width="1.5" stroke-linecap="round"/></svg>
<div style="position:absolute;left:1232px;top:217px;width:674px;height:762px;background:#fff;"></div>
<div style="position:absolute;left:1882px;top:221px;width:20px;height:754px;background:#1c2738;"></div>
<div style="position:absolute;left:1883px;top:222px;width:18px;height:18px;background:#4f7db2;"></div>
<svg style="position:absolute;left:1887px;top:226px" width="10" height="9" viewBox="0 0 10 9"><path d="M5 0.5L10 8.5H0Z" fill="#fff"/></svg>
<div style="position:absolute;left:1883px;top:766px;width:18px;height:74px;background:#4f7db2;"></div>
<div style="position:absolute;left:1883px;top:956px;width:18px;height:18px;background:#4f7db2;"></div>
<svg style="position:absolute;left:1887px;top:961.5px" width="10" height="9" viewBox="0 0 10 9"><path d="M0 0.5H10L5 8.5Z" fill="#fff"/></svg>
<span class="t" style="left:1252.3px;top:223.09px;color:#000080;font-size:12px;line-height:12px;-webkit-text-stroke:0.45px #000080;letter-spacing:-0.361px;">...:</span>
<span class="t" style="left:1279.3px;top:223.09px;color:#000;font-size:12px;line-height:12px;letter-spacing:0.098px;">document.addChild(replica)</span>
<span class="t" style="left:1518.6px;top:223.09px;color:#408080;font-size:12px;line-height:12px;font-style:italic;letter-spacing:-0.031px;"># add the replica to the document</span>
<span class="t" style="left:1252.3px;top:238.09px;color:#000080;font-size:12px;line-height:12px;-webkit-text-stroke:0.45px #000080;letter-spacing:-0.361px;">...:</span>
<span class="t" style="left:1252.3px;top:253.09px;color:#000080;font-size:12px;line-height:12px;-webkit-text-stroke:0.45px #000080;letter-spacing:-0.361px;">...:</span>
<span class="t" style="left:1279.3px;top:253.09px;color:#408080;font-size:12px;line-height:12px;font-style:italic;letter-spacing:0.024px;"># shift the replica in Y-direction</span>
<span class="t" style="left:1252.3px;top:268.09px;color:#000080;font-size:12px;line-height:12px;-webkit-text-stroke:0.45px #000080;letter-spacing:-0.361px;">...:</span>
<span class="t" style="left:1279.3px;top:268.09px;color:#000;font-size:12px;line-height:12px;">dy <span style="color:#666666">=</span> (r <span style="color:#666666">+</span> <span style="color:#666666">1</span>) <span style="color:#666666">*</span> distance</span>
<span class="t" style="left:1252.3px;top:283.09px;color:#000080;font-size:12px;line-height:12px;-webkit-text-stroke:0.45px #000080;letter-spacing:-0.361px;">...:</span>
<span class="t" style="left:1279.3px;top:283.09px;color:#000;font-size:12px;line-height:12px;letter-spacing:0.047px;">indexerOfAtoms <span style="color:#666666">=</span> replica.getNodes(<span style="color:#ba2121">'n.t a'</span>)</span>
<span class="t" style="left:1548.9px;top:283.09px;color:#408080;font-size:12px;line-height:12px;font-style:italic;letter-spacing:-0.027px;"># get an indexer of all atoms in the replicated nanotube</span>
<span class="t" style="left:1252.3px;top:298.09px;color:#000080;font-size:12px;line-height:12px;-webkit-text-stroke:0.45px #000080;letter-spacing:-0.361px;">...:</span>
<span class="t" style="left:1279.3px;top:298.09px;color:#000;font-size:12px;line-height:12px;letter-spacing:-0.017px;"><b style="color:#008000">for</b> a <b style="color:#aa22ff">in</b> indexerOfAtoms:</span>
<span class="t" style="left:1507.8px;top:298.09px;color:#408080;font-size:12px;line-height:12px;font-style:italic;letter-spacing:-0.051px;"># loop over all atoms in the replicated nanotube</span>
<span class="t" style="left:1252.3px;top:313.09px;color:#000080;font-size:12px;line-height:12px;-webkit-text-stroke:0.45px #000080;letter-spacing:-0.361px;">...:</span>
<span class="t" style="left:1290.9px;top:313.09px;color:#000;font-size:12px;line-height:12px;letter-spacing:-0.156px;">a.setY(a.getY() <span style="color:#666666">+</span> dy)</span>
<span class="t" style="left:1492px;top:313.09px;color:#408080;font-size:12px;line-height:12px;font-style:italic;letter-spacing:-0.007px;"># shift atoms in the Y-direction</span>
<span class="t" style="left:1252.3px;top:328.09px;color:#000080;font-size:12px;line-height:12px;-webkit-text-stroke:0.45px #000080;letter-spacing:-0.361px;">...:</span>
<span class="t" style="left:1252.3px;top:343.09px;color:#000080;font-size:12px;line-height:12px;-webkit-text-stroke:0.45px #000080;letter-spacing:-0.361px;">...:</span>
<span class="t" style="left:1267.3px;top:343.09px;color:#000;font-size:12px;line-height:12px;letter-spacing:-0.051px;">SAMSON.endHolding()</span>
<span class="t" style="left:1513.6px;top:343.09px;color:#408080;font-size:12px;line-height:12px;font-style:italic;letter-spacing:0.063px;"># end holding for undo/redo</span>
<span class="t" style="left:1239.9px;top:373.09px;color:#000080;font-size:12px;line-height:12px;letter-spacing:0.173px;">In [<b>17</b>]:</span>
<span class="t" style="left:1281.4px;top:373.09px;color:#000;font-size:12px;line-height:12px;letter-spacing:-0.025px;">indexerOfStructuralModels <span style="color:#666666">=</span> SAMSON.getNodes(<span style="color:#ba2121">'n.t sm'</span>)</span>
<span class="t" style="left:1608.2px;top:373.09px;color:#408080;font-size:12px;line-height:12px;font-style:italic;letter-spacing:-0.034px;"># get an indexer of all structural models in the</span>
<span class="t" style="left:1239.9px;top:388.09px;color:#408080;font-size:12px;line-height:12px;font-style:italic;letter-spacing:-0.019px;">active document</span>
<span class="t" style="left:1252.3px;top:403.09px;color:#000080;font-size:12px;line-height:12px;-webkit-text-stroke:0.45px #000080;letter-spacing:-0.361px;">...:</span>
<span class="t" style="left:1267.3px;top:403.09px;color:#000;font-size:12px;line-height:12px;letter-spacing:-0.026px;">sign <span style="color:#666666">=</span> <span style="color:#666666">1</span></span>
<span class="t" style="left:1465.5px;top:403.09px;color:#408080;font-size:12px;line-height:12px;font-style:italic;letter-spacing:-0.098px;"># used to change the phase of the sine function</span>
<span class="t" style="left:1252.3px;top:418.09px;color:#000080;font-size:12px;line-height:12px;-webkit-text-stroke:0.45px #000080;letter-spacing:-0.361px;">...:</span>
<span class="t" style="left:1252.3px;top:433.09px;color:#000080;font-size:12px;line-height:12px;-webkit-text-stroke:0.45px #000080;letter-spacing:-0.361px;">...:</span>
<span class="t" style="left:1267.3px;top:433.09px;color:#000;font-size:12px;line-height:12px;letter-spacing:-0.020px;">SAMSON.beginHolding(<span style="color:#ba2121">"Replicate nanotubes"</span>)</span>
<span class="t" style="left:1571.7px;top:433.09px;color:#408080;font-size:12px;line-height:12px;font-style:italic;letter-spacing:0.052px;"># start holding to allow for undo/redo</span>
<span class="t" style="left:1252.3px;top:448.09px;color:#000080;font-size:12px;line-height:12px;-webkit-text-stroke:0.45px #000080;letter-spacing:-0.361px;">...:</span>
<span class="t" style="left:1252.3px;top:463.09px;color:#000080;font-size:12px;line-height:12px;-webkit-text-stroke:0.45px #000080;letter-spacing:-0.361px;">...:</span>
<span class="t" style="left:1267.3px;top:463.09px;color:#000;font-size:12px;line-height:12px;letter-spacing:0.006px;"><b style="color:#008000">for</b> original <b style="color:#aa22ff">in</b> indexerOfStructuralModels:</span>
<span class="t" style="left:1542.7px;top:463.09px;color:#408080;font-size:12px;line-height:12px;font-style:italic;letter-spacing:-0.015px;"># loop through all structural models (all nanotubes)</span>
<span class="t" style="left:1252.3px;top:478.09px;color:#000080;font-size:12px;line-height:12px;-webkit-text-stroke:0.45px #000080;letter-spacing:-0.361px;">...:</span>
<span class="t" style="left:1279.3px;top:478.09px;color:#408080;font-size:12px;line-height:12px;font-style:italic;letter-spacing:-0.115px;"># create a replica</span>
<span class="t" style="left:1252.3px;top:493.09px;color:#000080;font-size:12px;line-height:12px;-webkit-text-stroke:0.45px #000080;letter-spacing:-0.361px;">...:</span>
<span class="t" style="left:1279.3px;top:493.09px;color:#000;font-size:12px;line-height:12px;letter-spacing:0.063px;">replica <span style="color:#666666">=</span> original.clone()</span>
<span class="t" style="left:1498.7px;top:493.09px;color:#408080;font-size:12px;line-height:12px;font-style:italic;letter-spacing:-0.011px;"># clone the original nanotube</span>
<span class="t" style="left:1252.3px;top:508.09px;color:#000080;font-size:12px;line-height:12px;-webkit-text-stroke:0.45px #000080;letter-spacing:-0.361px;">...:</span>
<span class="t" style="left:1279.3px;top:508.09px;color:#000;font-size:12px;line-height:12px;letter-spacing:-0.119px;">SAMSON.hold(replica)</span>
<span class="t" style="left:1506.6px;top:508.09px;color:#408080;font-size:12px;line-height:12px;font-style:italic;letter-spacing:-0.023px;"># hold the replica node for undo/redo</span>
<span class="t" style="left:1252.3px;top:523.09px;color:#000080;font-size:12px;line-height:12px;-webkit-text-stroke:0.45px #000080;letter-spacing:-0.361px;">...:</span>
<span class="t" style="left:1279.3px;top:523.09px;color:#000;font-size:12px;line-height:12px;letter-spacing:-0.108px;">replica.create()</span>
<span class="t" style="left:1477.5px;top:523.09px;color:#408080;font-size:12px;line-height:12px;font-style:italic;letter-spacing:-0.123px;"># create the replica</span>
<span class="t" style="left:1252.3px;top:538.09px;color:#000080;font-size:12px;line-height:12px;-webkit-text-stroke:0.45px #000080;letter-spacing:-0.361px;">...:</span>
<span class="t" style="left:1279.3px;top:538.09px;color:#000;font-size:12px;line-height:12px;letter-spacing:0.098px;">document.addChild(replica)</span>
<span class="t" style="left:1518.6px;top:538.09px;color:#408080;font-size:12px;line-height:12px;font-style:italic;letter-spacing:0.010px;"># add it to the document</span>
<span class="t" style="left:1252.3px;top:553.09px;color:#000080;font-size:12px;line-height:12px;-webkit-text-stroke:0.45px #000080;letter-spacing:-0.361px;">...:</span>
<span class="t" style="left:1252.3px;top:568.09px;color:#000080;font-size:12px;line-height:12px;-webkit-text-stroke:0.45px #000080;letter-spacing:-0.361px;">...:</span>
<span class="t" style="left:1279.3px;top:568.09px;color:#000;font-size:12px;line-height:12px;letter-spacing:0.013px;">shift <span style="color:#666666">=</span> distance <span style="color:#666666">/</span> <span style="color:#666666">2.0</span></span>
<span class="t" style="left:1488.7px;top:568.09px;color:#408080;font-size:12px;line-height:12px;font-style:italic;letter-spacing:0.004px;"># for shifting nanotubes from the border</span>
<span class="t" style="left:1252.3px;top:583.09px;color:#000080;font-size:12px;line-height:12px;-webkit-text-stroke:0.45px #000080;letter-spacing:-0.361px;">...:</span>
<span class="t" style="left:1279.3px;top:583.09px;color:#000;font-size:12px;line-height:12px;letter-spacing:-0.007px;">indexerOfAtomsInReplica <span style="color:#666666">=</span> replica.getNodes(<span style="color:#ba2121">'n.t a'</span>)</span>
<span class="t" style="left:1569.6px;top:583.09px;color:#408080;font-size:12px;line-height:12px;font-style:italic;letter-spacing:-0.018px;"># get an indexer of all atoms in the replicated nanotube</span>
<span class="t" style="left:1252.3px;top:598.09px;color:#000080;font-size:12px;line-height:12px;-webkit-text-stroke:0.45px #000080;letter-spacing:-0.361px;">...:</span>
<span class="t" style="left:1252.3px;top:613.09px;color:#000080;font-size:12px;line-height:12px;-webkit-text-stroke:0.45px #000080;letter-spacing:-0.361px;">...:</span>
<span class="t" style="left:1279.3px;top:613.09px;color:#408080;font-size:12px;line-height:12px;font-style:italic;letter-spacing:-0.117px;"># rotate the replica by 90 degrees by changing x and y coordinates of its atoms</span>
<span class="t" style="left:1252.3px;top:628.09px;color:#000080;font-size:12px;line-height:12px;-webkit-text-stroke:0.45px #000080;letter-spacing:-0.361px;">...:</span>
<span class="t" style="left:1279.3px;top:628.09px;color:#408080;font-size:12px;line-height:12px;font-style:italic;letter-spacing:0.010px;"># and shift the replica from the borders to have '#' pattern</span>
<span class="t" style="left:1252.3px;top:643.09px;color:#000080;font-size:12px;line-height:12px;-webkit-text-stroke:0.45px #000080;letter-spacing:-0.361px;">...:</span>
<span class="t" style="left:1279.3px;top:643.09px;color:#000;font-size:12px;line-height:12px;letter-spacing:-0.071px;"><b style="color:#008000">for</b> a <b style="color:#aa22ff">in</b> indexerOfAtomsInReplica:</span>
<span class="t" style="left:1252.3px;top:658.09px;color:#000080;font-size:12px;line-height:12px;-webkit-text-stroke:0.45px #000080;letter-spacing:-0.361px;">...:</span>
<span class="t" style="left:1290.9px;top:658.09px;color:#000;font-size:12px;line-height:12px;letter-spacing:-0.083px;">x <span style="color:#666666">=</span> a.getX()</span>
<span class="t" style="left:1252.3px;top:673.09px;color:#000080;font-size:12px;line-height:12px;-webkit-text-stroke:0.45px #000080;letter-spacing:-0.361px;">...:</span>
<span class="t" style="left:1290.9px;top:673.09px;color:#000;font-size:12px;line-height:12px;letter-spacing:-0.083px;">y <span style="color:#666666">=</span> a.getY()</span>
<span class="t" style="left:1252.3px;top:688.09px;color:#000080;font-size:12px;line-height:12px;-webkit-text-stroke:0.45px #000080;letter-spacing:-0.361px;">...:</span>
<span class="t" style="left:1290.9px;top:688.09px;color:#000;font-size:12px;line-height:12px;letter-spacing:-0.065px;">a.setY(x <span style="color:#666666">-</span> shift)</span>
<span class="t" style="left:1252.3px;top:703.09px;color:#000080;font-size:12px;line-height:12px;-webkit-text-stroke:0.45px #000080;letter-spacing:-0.361px;">...:</span>
<span class="t" style="left:1290.9px;top:703.09px;color:#000;font-size:12px;line-height:12px;letter-spacing:-0.072px;">a.setX(y <span style="color:#666666">+</span> shift)</span>
<span class="t" style="left:1252.3px;top:718.09px;color:#000080;font-size:12px;line-height:12px;-webkit-text-stroke:0.45px #000080;letter-spacing:-0.361px;">...:</span>
<span class="t" style="left:1252.3px;top:733.09px;color:#000080;font-size:12px;line-height:12px;-webkit-text-stroke:0.45px #000080;letter-spacing:-0.361px;">...:</span>
<span class="t" style="left:1279.3px;top:733.09px;color:#408080;font-size:12px;line-height:12px;font-style:italic;letter-spacing:0.019px;"># apply sine function in Z-direction to original and replicated nanotubes</span>
<span class="t" style="left:1252.3px;top:748.09px;color:#000080;font-size:12px;line-height:12px;-webkit-text-stroke:0.45px #000080;letter-spacing:-0.361px;">...:</span>
<span class="t" style="left:1279.3px;top:748.09px;color:#000;font-size:12px;line-height:12px;letter-spacing:0.069px;">indexerOfAtomsInOriginal <span style="color:#666666">=</span> original.getNodes(<span style="color:#ba2121">'n.t a'</span>)</span>
<span class="t" style="left:1572.5px;top:748.09px;color:#408080;font-size:12px;line-height:12px;font-style:italic;letter-spacing:0.004px;"># get an indexer of all atoms in the original nanotube</span>
<span class="t" style="left:1252.3px;top:763.09px;color:#000080;font-size:12px;line-height:12px;-webkit-text-stroke:0.45px #000080;letter-spacing:-0.361px;">...:</span>
<span class="t" style="left:1279.3px;top:763.09px;color:#000;font-size:12px;line-height:12px;letter-spacing:0.001px;"><b style="color:#008000">for</b> a <b style="color:#aa22ff">in</b> indexerOfAtomsInOriginal:</span>
<span class="t" style="left:1529.4px;top:763.09px;color:#408080;font-size:12px;line-height:12px;font-style:italic;letter-spacing:-0.018px;"># loop over all atoms in the original nanotube</span>
<span class="t" style="left:1252.3px;top:778.09px;color:#000080;font-size:12px;line-height:12px;-webkit-text-stroke:0.45px #000080;letter-spacing:-0.361px;">...:</span>
<span class="t" style="left:1290.9px;top:778.09px;color:#000;font-size:12px;line-height:12px;letter-spacing:0.002px;">w <span style="color:#666666">=</span> a.getX() <span style="color:#666666">/</span> distance</span>
<span class="t" style="left:1497.9px;top:778.09px;color:#408080;font-size:12px;line-height:12px;font-style:italic;letter-spacing:0.001px;"># [dimensionless quantity]</span>
<span class="t" style="left:1252.3px;top:793.09px;color:#000080;font-size:12px;line-height:12px;-webkit-text-stroke:0.45px #000080;letter-spacing:-0.361px;">...:</span>
<span class="t" style="left:1290.9px;top:793.09px;color:#000;font-size:12px;line-height:12px;letter-spacing:-0.040px;">a.setZ(a.getZ() <span style="color:#666666">+</span> A <span style="color:#666666">*</span> sign <span style="color:#666666">*</span> sin(pi <span style="color:#666666">*</span> w.value))</span>
<span class="t" style="left:1536.4px;top:793.09px;color:#408080;font-size:12px;line-height:12px;font-style:italic;letter-spacing:-0.002px;"># apply sine function to the Z-coordinate of an atom</span>
<span class="t" style="left:1252.3px;top:808.09px;color:#000080;font-size:12px;line-height:12px;-webkit-text-stroke:0.45px #000080;letter-spacing:-0.361px;">...:</span>
<span class="t" style="left:1252.3px;top:823.09px;color:#000080;font-size:12px;line-height:12px;-webkit-text-stroke:0.45px #000080;letter-spacing:-0.361px;">...:</span>
<span class="t" style="left:1279.3px;top:823.09px;color:#000;font-size:12px;line-height:12px;letter-spacing:-0.071px;"><b style="color:#008000">for</b> a <b style="color:#aa22ff">in</b> indexerOfAtomsInReplica:</span>
<span class="t" style="left:1528.6px;top:823.09px;color:#408080;font-size:12px;line-height:12px;font-style:italic;letter-spacing:-0.045px;"># loop over all atoms in the replicated nanotube</span>
<span class="t" style="left:1252.3px;top:838.09px;color:#000080;font-size:12px;line-height:12px;-webkit-text-stroke:0.45px #000080;letter-spacing:-0.361px;">...:</span>
<span class="t" style="left:1290.9px;top:838.09px;color:#000;font-size:12px;line-height:12px;letter-spacing:0.039px;">w <span style="color:#666666">=</span> (a.getY() <span style="color:#666666">-</span> shift) <span style="color:#666666">/</span> distance</span>
<span class="t" style="left:1509.5px;top:838.09px;color:#408080;font-size:12px;line-height:12px;font-style:italic;letter-spacing:0.001px;"># [dimensionless quantity], take into account the shift we did</span>
<span class="t" style="left:1239.9px;top:853.09px;color:#408080;font-size:12px;line-height:12px;font-style:italic;letter-spacing:-0.013px;">previously</span>
<span class="t" style="left:1252.3px;top:868.09px;color:#000080;font-size:12px;line-height:12px;-webkit-text-stroke:0.45px #000080;letter-spacing:-0.361px;">...:</span>
<span class="t" style="left:1290.9px;top:868.09px;color:#000;font-size:12px;line-height:12px;letter-spacing:-0.040px;">a.setZ(a.getZ() <span style="color:#666666">+</span> A <span style="color:#666666">*</span> sign <span style="color:#666666">*</span> sin(pi <span style="color:#666666">*</span> w.value))</span>
<span class="t" style="left:1536.4px;top:868.09px;color:#408080;font-size:12px;line-height:12px;font-style:italic;letter-spacing:-0.002px;"># apply sine function to the Z-coordinate of an atom</span>
<span class="t" style="left:1252.3px;top:883.09px;color:#000080;font-size:12px;line-height:12px;-webkit-text-stroke:0.45px #000080;letter-spacing:-0.361px;">...:</span>
<span class="t" style="left:1252.3px;top:898.09px;color:#000080;font-size:12px;line-height:12px;-webkit-text-stroke:0.45px #000080;letter-spacing:-0.361px;">...:</span>
<span class="t" style="left:1279.3px;top:898.09px;color:#000;font-size:12px;line-height:12px;letter-spacing:0.015px;">sign <span style="color:#666666">=</span> <span style="color:#666666">-1</span> <span style="color:#666666">*</span> sign</span>
<span class="t" style="left:1479.6px;top:898.09px;color:#408080;font-size:12px;line-height:12px;font-style:italic;letter-spacing:-0.125px;"># change the phase to the opposite one</span>
<span class="t" style="left:1252.3px;top:913.09px;color:#000080;font-size:12px;line-height:12px;-webkit-text-stroke:0.45px #000080;letter-spacing:-0.361px;">...:</span>
<span class="t" style="left:1252.3px;top:928.09px;color:#000080;font-size:12px;line-height:12px;-webkit-text-stroke:0.45px #000080;letter-spacing:-0.361px;">...:</span>
<span class="t" style="left:1267.3px;top:928.09px;color:#000;font-size:12px;line-height:12px;letter-spacing:-0.051px;">SAMSON.endHolding()</span>
<span class="t" style="left:1513.6px;top:928.09px;color:#408080;font-size:12px;line-height:12px;font-style:italic;letter-spacing:0.063px;"># end holding for undo/redo</span>
<span class="t" style="left:1239.9px;top:958.09px;color:#000080;font-size:12px;line-height:12px;letter-spacing:0.173px;">In [<b>18</b>]:</span>
<div style="position:absolute;left:0px;top:1001px;width:1920px;height:24px;background:#313f53;"></div>
<span class="t" style="left:6.2px;top:1008.09px;color:#fff;font-size:12px;line-height:12px;letter-spacing:-0.258px;">Render the scale</span>
</body></html>
